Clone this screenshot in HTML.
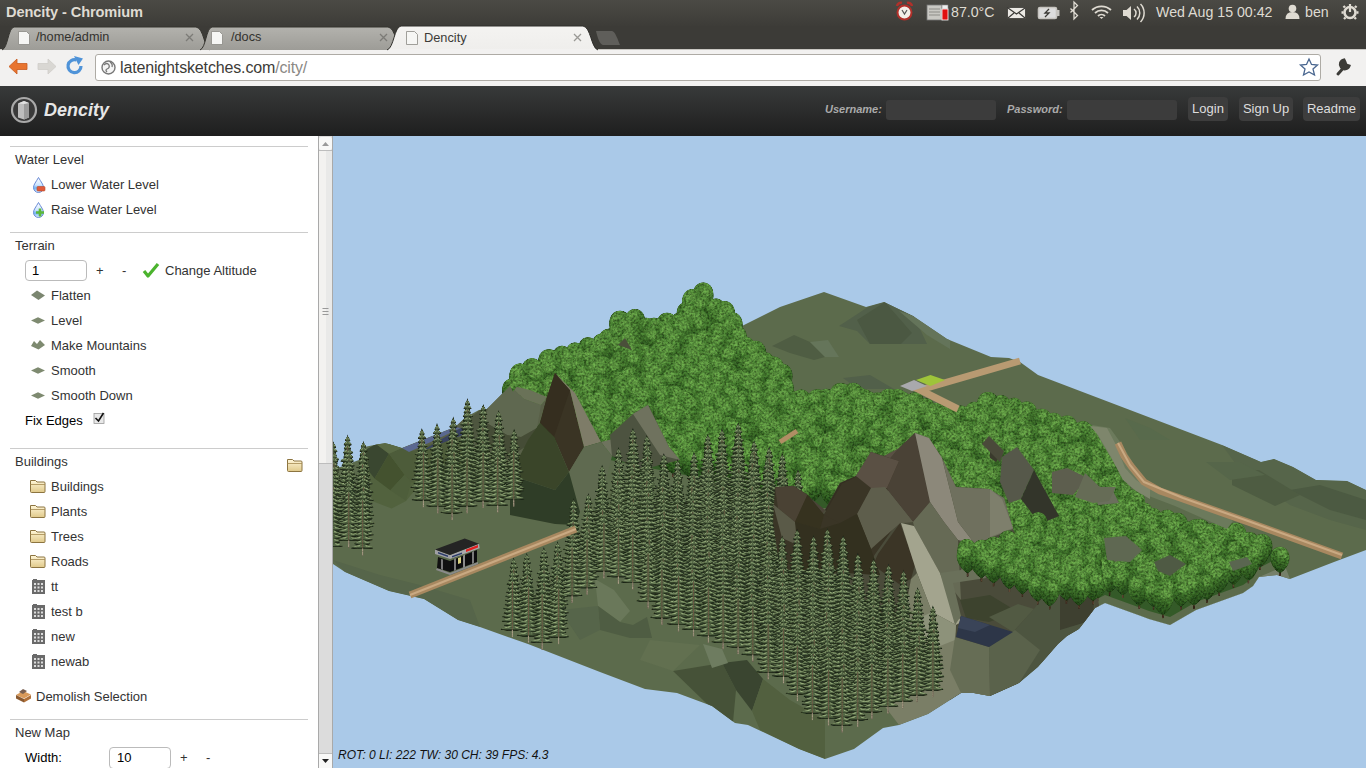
<!DOCTYPE html>
<html><head><meta charset="utf-8">
<style>
*{margin:0;padding:0;box-sizing:border-box}
html,body{width:1366px;height:768px;overflow:hidden;background:#fff;font-family:"Liberation Sans",sans-serif}
.abs{position:absolute}
#topbar{left:0;top:0;width:1366px;height:26px;background:linear-gradient(#4b4a45,#3d3c38)}
#tabstrip{left:0;top:26px;width:1366px;height:24px;background:#3c3b37}
#title{left:6px;top:4px;font-size:14.6px;font-weight:bold;color:#dfdbd2;letter-spacing:-0.1px}
.sys{color:#dfdbd2;font-size:14.2px;top:4px}
#toolbar{left:0;top:49px;width:1366px;height:37px;background:#f2f1f0;border-top:1px solid #c9c7c2}
#url{left:95px;top:54px;width:1226px;height:27px;background:#fff;border:1px solid #aeaba5;border-radius:3px}
#urltext{left:120px;top:58.5px;font-size:16px;color:#3c3b37;letter-spacing:-0.15px}
#hdr{left:0;top:86px;width:1366px;height:50px;background:linear-gradient(#383a3a,#1e1e1e)}
#logo{left:44px;top:100px;font-size:18px;font-weight:bold;font-style:italic;color:#e6e6e6}
.lbl{font-size:11px;font-weight:bold;font-style:italic;color:#aaa;top:103px}
.inp{top:100px;width:110px;height:20px;background:#3c3c3c;border-radius:3px}
.btn{top:97px;height:24px;background:#3d3d3d;border-radius:4px;color:#ddd;font-size:13px;line-height:24px;text-align:center}
#side{left:0;top:136px;width:318px;height:632px;background:#fff;color:#333;font-size:13px}
.hr{left:10px;width:298px;height:1px;background:#ccc}
.t{position:absolute;font-size:13px;line-height:15px;color:#333;white-space:nowrap}
#scroll{left:318px;top:136px;width:15px;height:632px;background:#dcdcdc;border-left:1px solid #a9a9a9;border-right:1px solid #a9a9a9}
#canvas{left:333px;top:136px;width:1033px;height:632px;background:#aac9e8;overflow:hidden}
</style></head><body>
<div id="topbar" class="abs"></div>
<div id="tabstrip" class="abs"></div>
<div id="toolbar" class="abs"></div>
<div id="url" class="abs"></div>

<svg class="abs" style="left:0;top:0" width="1366" height="86" viewBox="0 0 1366 86">
<defs>
<linearGradient id="tabin" x1="0" y1="0" x2="0" y2="1"><stop offset="0" stop-color="#b3b2ad"/><stop offset="1" stop-color="#9d9c97"/></linearGradient>
<linearGradient id="tabact" x1="0" y1="0" x2="0" y2="1"><stop offset="0" stop-color="#f4f3f1"/><stop offset="1" stop-color="#efeeec"/></linearGradient>
</defs>
<path d="M2,50 C8,48 8,28 14,27 L196,27 C204,28 204,48 210,50" fill="url(#tabin)" stroke="#35342f" stroke-width="1"/>
<path d="M200,50 C206,48 206,28 212,27 L388,27 C396,28 396,48 402,50" fill="url(#tabin)" stroke="#35342f" stroke-width="1"/>
<path d="M387,50 C394,48 394,27 401,26 L583,26 C591,27 591,48 598,50" fill="url(#tabact)" stroke="#2f2e2a" stroke-width="1"/><rect x="389" y="49" width="207" height="2" fill="#f2f1f0"/>
<path d="M596,31 L612,31 C615,31 618,40 620,45 L603,45 C600,45 597,36 596,31Z" fill="#5f5e5a"/>
<g fill="#f6f6f4" stroke="#8a8984" stroke-width="0.8">
<path d="M18.5,31.5 h8 l3,3 v10 h-11z"/><path d="M211.5,31.5 h8 l3,3 v10 h-11z"/><path d="M406.5,31.5 h8 l3,3 v10 h-11z"/>
</g>
<g stroke="#7c7b77" stroke-width="1.3"><path d="M186,34 l7,7 M193,34 l-7,7"/><path d="M380,34 l7,7 M387,34 l-7,7"/></g>
<g stroke="#9a9995" stroke-width="1.3"><path d="M574,34 l7,7 M581,34 l-7,7"/></g>
<path d="M9,66.5 L17,59 L17,63.5 L27,63.5 L27,69.5 L17,69.5 L17,74 Z" fill="#e8742f" stroke="#c85a1e" stroke-width="0.8" stroke-linejoin="round"/>
<path d="M56,66.5 L48,59 L48,63.5 L38,63.5 L38,69.5 L48,69.5 L48,74 Z" fill="#d9d7d3" stroke="#cfcdc9" stroke-width="0.8" stroke-linejoin="round"/>
<path d="M81,66 A6.5,6.5 0 1 1 76.5,60" stroke="#4f93d8" stroke-width="3.2" fill="none"/>
<path d="M74,56 L83,58.5 L78.5,65 Z" fill="#4f93d8"/>
<circle cx="108.5" cy="67.5" r="6.5" fill="#f4f4f4" stroke="#777" stroke-width="1.4"/>
<path d="M104,65 q3,-3 5,0 q1,3 -2,4 q-2,1 0,3 M110,62 q3,2 2,5" stroke="#777" stroke-width="1.3" fill="none"/>
<path d="M1309,59 L1311.5,64.5 L1317.5,65 L1313,69 L1314.5,75 L1309,72 L1303.5,75 L1305,69 L1300.5,65 L1306.5,64.5 Z" fill="none" stroke="#4a6790" stroke-width="1.3"/>
<path d="M1338,74 L1346,65 M1344,60 a4.5,4.5 0 1 0 5,6 l-3,-1 -1,-3z" stroke="#3c3b37" stroke-width="3" fill="#3c3b37" stroke-linecap="round"/>
<!-- system tray -->
<g>
<circle cx="904.5" cy="12.5" r="7" fill="#f3efe8" stroke="#b0302a" stroke-width="2"/>
<path d="M897,6 a4,4 0 0 1 5,-3 M912,6 a4,4 0 0 0 -5,-3" stroke="#b0302a" stroke-width="2.5" fill="none"/>
<path d="M902,10 l2.5,4 2.5,-4" stroke="#555" stroke-width="1.2" fill="none"/>
<rect x="927" y="5" width="15" height="15" fill="#c9c8c3" stroke="#777" stroke-width="0.8"/>
<path d="M929,9h11M929,12h11M929,15h11" stroke="#8d8c87" stroke-width="1"/>
<rect x="942" y="5" width="6" height="4" fill="#eee" stroke="#888" stroke-width="0.6"/>
<rect x="942" y="9" width="6" height="11" fill="#e01010" stroke="#fff" stroke-width="0.8"/>
<rect x="1007.5" y="7.5" width="18" height="11" fill="#ebe9e4" stroke="#3c3b37" stroke-width="0.8"/>
<path d="M1008,8 l8.5,6 8.5,-6 M1008,18 l6,-5 M1025,18 l-6,-5" stroke="#3c3b37" stroke-width="1.2" fill="none"/>
<rect x="1038.5" y="7.5" width="18" height="11" rx="1.5" fill="#ddd" stroke="#c6c4bf" stroke-width="1.6"/>
<rect x="1057" y="10" width="2.5" height="6" fill="#c6c4bf"/>
<path d="M1049,9 l-4,4 h4 l-4,4" stroke="#3c3b37" stroke-width="1.3" fill="none"/>
<path d="M1070.5,8.5 l7,7 -3.5,3.5 v-17 l3.5,3.5 -7,7" stroke="#dfdbd2" stroke-width="1.3" fill="none"/>
<path d="M1092,10 a14,14 0 0 1 19,0 M1095,13 a9.5,9.5 0 0 1 13,0 M1098,16 a5,5 0 0 1 7,0" stroke="#dfdbd2" stroke-width="1.8" fill="none"/>
<path d="M1101.5,19 l-2,-2 h4z" fill="#dfdbd2"/>
<path d="M1123,10 h3.5 l4.5,-4 v14 l-4.5,-4 h-3.5z" fill="#dfdbd2"/>
<path d="M1134,9 a5,5 0 0 1 0,8 M1137,6.5 a9,9 0 0 1 0,13 M1140.5,4 a13,13 0 0 1 0,18" stroke="#dfdbd2" stroke-width="1.5" fill="none"/>
<circle cx="1292.5" cy="8.5" r="3.8" fill="#dfdbd2"/>
<path d="M1285.5,19 q0,-7 7,-7 q7,0 7,7z" fill="#dfdbd2"/>
<circle cx="1350" cy="12.5" r="5.5" fill="none" stroke="#dfdbd2" stroke-width="2.6"/>
<path d="M1350,4 v8" stroke="#dfdbd2" stroke-width="2.2"/>
<path d="M1350,5 v0 M1343.5,12.5h-2 M1356.5,12.5h2 M1345.5,17.5l-1.5,1.5 M1354.5,17.5l1.5,1.5 M1345,7.5 l-1.5,-1.5 M1355,7.5l1.5,-1.5" stroke="#dfdbd2" stroke-width="2.4"/>
</g>
</svg>
<div class="abs" style="left:36px;top:30px;font-size:12.7px;color:#33322e">/home/admin</div>
<div class="abs" style="left:231px;top:30px;font-size:12.7px;color:#33322e">/docs</div>
<div class="abs" style="left:424px;top:30px;font-size:12.8px;color:#3c3b37">Dencity</div>
<div class="abs sys" style="left:951px">87.0°C</div>
<div class="abs sys" style="left:1156px">Wed Aug 15 00:42</div>
<div class="abs sys" style="left:1305px">ben</div>
<div id="title" class="abs">Dencity - Chromium</div>
<div id="urltext" class="abs">latenightsketches.com<span style="color:#8a8884">/city/</span></div>
<div id="hdr" class="abs"></div>
<svg class="abs" style="left:0;top:86px" width="44" height="50" viewBox="0 86 44 50">
<circle cx="24" cy="110" r="12" fill="#3a3a3a" stroke="#a9a9a9" stroke-width="2.2"/>
<path d="M18,103.5 l6,-2.5 l5,2 v14.5 l-5,2 l-6,-2z" fill="#bdbdbd"/>
<path d="M24,103.5 l5,-0.5 v14.5 l-5,2z" fill="#9a9a9a"/>
<path d="M18,103.5 l6,-2.5 l5,2 l-5,1z" fill="#e0e0e0"/>
</svg>
<div id="logo" class="abs">Dencity</div>
<div class="abs lbl" style="left:825px">Username:</div>
<div class="abs inp" style="left:886px"></div>
<div class="abs lbl" style="left:1007px">Password:</div>
<div class="abs inp" style="left:1067px"></div>
<div class="abs btn" style="left:1188px;width:40px">Login</div>
<div class="abs btn" style="left:1239px;width:54px">Sign Up</div>
<div class="abs btn" style="left:1303px;width:57px">Readme</div>
<div id="side" class="abs"></div>

<div class="abs hr" style="top:146px"></div>
<div class="t" style="left:15px;top:152px">Water Level</div>
<div class="t" style="left:51px;top:177px">Lower Water Level</div>
<div class="t" style="left:51px;top:202px">Raise Water Level</div>
<div class="abs hr" style="top:232px"></div>
<div class="t" style="left:15px;top:238px">Terrain</div>
<div class="abs" style="left:25px;top:260px;width:62px;height:21px;border:1px solid #bbb;border-radius:4px;background:#fff"></div>
<div class="t" style="left:32px;top:263px;color:#000">1</div>
<div class="t" style="left:96px;top:263px">+</div>
<div class="t" style="left:122px;top:263px">-</div>
<div class="t" style="left:165px;top:263px">Change Altitude</div>
<div class="t" style="left:51px;top:288px">Flatten</div>
<div class="t" style="left:51px;top:313px">Level</div>
<div class="t" style="left:51px;top:338px">Make Mountains</div>
<div class="t" style="left:51px;top:363px">Smooth</div>
<div class="t" style="left:51px;top:388px">Smooth Down</div>
<div class="t" style="left:25px;top:413px;color:#000">Fix Edges</div>
<div class="abs hr" style="top:448px"></div>
<div class="t" style="left:15px;top:454px">Buildings</div>
<div class="t" style="left:51px;top:479px">Buildings</div>
<div class="t" style="left:51px;top:504px">Plants</div>
<div class="t" style="left:51px;top:529px">Trees</div>
<div class="t" style="left:51px;top:554px">Roads</div>
<div class="t" style="left:51px;top:579px">tt</div>
<div class="t" style="left:51px;top:604px">test b</div>
<div class="t" style="left:51px;top:629px">new</div>
<div class="t" style="left:51px;top:654px">newab</div>
<div class="t" style="left:36px;top:689px">Demolish Selection</div>
<div class="abs hr" style="top:719px"></div>
<div class="t" style="left:15px;top:725px">New Map</div>
<div class="t" style="left:25px;top:750px;color:#000">Width:</div>
<div class="abs" style="left:109px;top:747px;width:62px;height:22px;border:1px solid #bbb;border-radius:4px;background:#fff"></div>
<div class="t" style="left:117px;top:750px;color:#000">10</div>
<div class="t" style="left:180px;top:750px">+</div>
<div class="t" style="left:206px;top:750px">-</div>
<svg class="abs" style="left:0;top:136px" width="318" height="632" viewBox="0 136 318 632">
<defs>
<linearGradient id="drop" x1="0" y1="0" x2="0" y2="1"><stop offset="0" stop-color="#fff"/><stop offset="0.5" stop-color="#cfe6ff"/><stop offset="0.7" stop-color="#6fb2f2"/><stop offset="1" stop-color="#e8f4ff"/></linearGradient>
<linearGradient id="fold" x1="0" y1="0" x2="0" y2="1"><stop offset="0" stop-color="#fff6d8"/><stop offset="1" stop-color="#e0c98a"/></linearGradient>
<g id="dropi"><path d="M38.5,177.5 C36,182 33.5,184.5 33.5,187.5 a5,5 0 0 0 10,0 C43.5,184.5 41,182 38.5,177.5z" fill="url(#drop)" stroke="#5b7fd0" stroke-width="0.9"/></g>
<g id="folder"><path d="M30.5,480.5 h5 l1.5,1.5 h7 a1,1 0 0 1 1,1 v8.5 a1,1 0 0 1 -1,1 h-12.5 a1,1 0 0 1 -1,-1z" fill="url(#fold)" stroke="#8c7440" stroke-width="1"/><path d="M30.5,484.5 h14.5" stroke="#a48a50" stroke-width="0.8"/></g>
<g id="bld"><rect x="32" y="580" width="13" height="14" fill="#6a6a6a"/><path d="M34,583h2v2h-2zM37.5,583h2v2h-2zM41,583h2v2h-2zM34,586.5h2v2h-2zM37.5,586.5h2v2h-2zM41,586.5h2v2h-2zM34,590h2v2h-2zM37.5,590h2v2h-2zM41,590h2v2h-2z" fill="#dcdcdc"/><rect x="33" y="579" width="4" height="2" fill="#6a6a6a"/></g>
<g id="terr"><path d="M31,296 l7,-4 l7,4 l-7,4z" fill="#7e8a70"/></g>
</defs>
<use href="#dropi"/>
<rect x="37" y="186.5" width="8" height="4.5" rx="1" fill="#e05a3a" stroke="#b84a2a" stroke-width="0.6"/>
<use href="#dropi" y="25"/>
<path d="M40,208.5 v8 M36,212.5 h8" stroke="#5cb83a" stroke-width="2.6"/>
<path d="M144,271 l4,5 l10,-12" stroke="#4bb32e" stroke-width="3.2" fill="none" stroke-linejoin="round"/>
<path d="M31,295 l6,-4.5 l8,5 l-6.5,4.5z" fill="#7b8670"/>
<path d="M31,320.5 l7,-3.2 l7,3.2 l-7,3.2z" fill="#7e8a70"/>
<path d="M31,346 l3,-5 l3,3 l3,-4 l5,5 l-6.5,4.5 z" fill="#7e8a70"/>
<path d="M31,370.5 l7,-3.2 l7,3.2 l-7,3.2z" fill="#7e8a70"/>
<path d="M31,395.5 l7,-3.2 l7,3.2 l-7,3.2z" fill="#7e8a70"/>
<rect x="94" y="413.5" width="10" height="10" fill="#e8e8e8" stroke="#999" stroke-width="0.8"/>
<path d="M95.5,418 l3,3 l5,-8" stroke="#111" stroke-width="1.6" fill="none"/>
<use href="#folder" x="257" y="-21"/>
<use href="#folder"/>
<use href="#folder" y="25"/>
<use href="#folder" y="50"/>
<use href="#folder" y="75"/>
<use href="#bld"/>
<use href="#bld" y="25"/>
<use href="#bld" y="50"/>
<use href="#bld" y="75"/>
<path d="M16,695 l7,-4 l8,3.5 l-7,4z" fill="#d99a5a"/>
<path d="M16,695 v3.5 l8,4 v-3.5z" fill="#8a5a30"/>
<path d="M24,699 l7,-4 v3.5 l-7,4z" fill="#b07038"/>
<path d="M19,692 l4,-3 l4,2 l-4,3z" fill="#7a6050"/>
</svg>
<div id="scroll" class="abs"></div>
<svg class="abs" style="left:318px;top:136px" width="15" height="632" viewBox="318 136 15 632">
<rect x="319" y="137" width="13" height="13" rx="2" fill="#f8f8f7"/>
<path d="M322,146 l3.5,-4 l3.5,4z" fill="#9a9a9a"/>
<rect x="319" y="150" width="13" height="314" fill="#f3f2f0"/>
<rect x="326" y="150" width="6" height="314" fill="#e9e9e8"/>
<path d="M319,150.5 h13 M319,463.5 h13" stroke="#bdbdbd" stroke-width="1"/>
<path d="M322.5,308.5 h6 M322.5,311.5 h6 M322.5,314.5 h6" stroke="#999" stroke-width="1"/>
<rect x="319" y="754" width="13" height="14" fill="#f8f8f7"/>
<path d="M322,759 l3.5,4 l3.5,-4z" fill="#222"/>
<path d="M319,753.5 h13" stroke="#bdbdbd" stroke-width="1"/>
</svg>
<div id="canvas" class="abs"><svg width="1033" height="632" viewBox="333 136 1033 632" style="position:absolute;left:0;top:0">
<defs>
<clipPath id="clipT"><polygon points="333,470 343,466 359,460 364,447 385,443 402,448 455,427 466,417 479,410 487,409 510,386 513,392 520,382 536,377 562,360 588,352 609,346 620,330 635,326 654,334 680,328 693,310 703,304 716,312 732,330 740,327 780,307 824,292 866,307 884,302 913,316 947,339 991,357 1009,358 1020,362 1038,375 1080,391 1222,445 1261,462 1274,459 1293,467 1316,480 1347,481 1366,490 1366,550 1334,562 1290,579 1277,575 1259,577 1253,586 1243,593 1196,610 1170,625 1149,619 1141,616 1105,603 1095,608 1079,629 1067,636 1058,644 1038,667 1019,683 990,696 974,693 961,693 928,714 899,725 883,728 854,749 825,759 799,749 748,725 735,723 712,706 677,693 645,689 600,672 528,644 480,627 458,620 424,599 389,591 345,572 333,564"/></clipPath>
<filter id="leaf" x="333" y="136" width="1033" height="632" filterUnits="userSpaceOnUse"><feTurbulence type="fractalNoise" baseFrequency="0.45" numOctaves="2" seed="5" result="n"/><feColorMatrix in="n" type="matrix" values="1.9 0 0 0 -0.45 1.9 0 0 0 -0.45 1.9 0 0 0 -0.45 0 0 0 0 1" result="g"/><feComposite in="SourceGraphic" in2="g" operator="arithmetic" k1="1.15" k2="0.45" k3="0" k4="0"/></filter>
<filter id="needle" x="333" y="136" width="1033" height="632" filterUnits="userSpaceOnUse"><feTurbulence type="fractalNoise" baseFrequency="0.35 0.8" numOctaves="2" seed="9" result="n"/><feColorMatrix in="n" type="matrix" values="1 0 0 0 0 1 0 0 0 0 1 0 0 0 0 0 0 0 0 1" result="g"/><feComposite in="SourceGraphic" in2="g" operator="arithmetic" k1="1.2" k2="0.62" k3="0" k4="0"/></filter>
<g id="ct"><path d="M0,-67 L3,-50 L6,-20 L0,-14 L-6,-20 L-3,-50Z" fill="#263120"/><path d="M0,-65.2 L2.7,-60.6 L1.0,-59.8 L-0.9,-59.8 L-2.5,-60.6Z" fill="#222c1b"/><path d="M0,-65.4 L2.4,-61.4 L1.1,-61.0 L-1.0,-61.0 L-2.2,-61.4Z" fill="#4a5b3d"/><path d="M-0.2,-64.4 L-2.0,-61.8 L-0.5,-62.4Z M0.5,-64.0 L2.3,-61.7 L0.7,-62.2Z" fill="#85986c"/><path d="M0,-61.1 L4.1,-56.5 L1.7,-55.7 L-1.5,-55.7 L-3.9,-56.5Z" fill="#222c1b"/><path d="M0,-61.3 L3.8,-57.3 L1.8,-56.9 L-1.7,-56.9 L-3.6,-57.3Z" fill="#4a5b3d"/><path d="M-0.3,-60.3 L-3.4,-57.7 L-0.9,-58.3Z M0.8,-59.9 L3.7,-57.6 L1.2,-58.1Z" fill="#85986c"/><path d="M0,-57.0 L3.3,-52.4 L1.2,-51.6 L-1.5,-51.6 L-3.8,-52.4Z" fill="#222c1b"/><path d="M0,-57.2 L3.0,-53.2 L1.4,-52.8 L-1.6,-52.8 L-3.5,-53.2Z" fill="#4a5b3d"/><path d="M-0.3,-56.2 L-3.3,-53.6 L-0.9,-54.2Z M0.6,-55.8 L2.9,-53.5 L0.9,-54.0Z" fill="#85986c"/><path d="M0,-52.9 L5.6,-48.3 L2.4,-47.5 L-1.8,-47.5 L-4.5,-48.3Z" fill="#222c1b"/><path d="M0,-53.1 L5.3,-49.1 L2.7,-48.7 L-2.0,-48.7 L-4.2,-49.1Z" fill="#4a5b3d"/><path d="M-0.4,-52.1 L-4.0,-49.5 L-1.1,-50.1Z M1.2,-51.7 L5.2,-49.4 L1.7,-49.9Z" fill="#85986c"/><path d="M0,-48.8 L4.3,-44.2 L1.7,-43.4 L-1.8,-43.4 L-4.3,-44.2Z" fill="#222c1b"/><path d="M0,-49.0 L4.0,-45.0 L1.9,-44.6 L-1.9,-44.6 L-4.0,-45.0Z" fill="#4a5b3d"/><path d="M-0.4,-48.0 L-3.8,-45.4 L-1.1,-46.0Z M0.9,-47.6 L3.9,-45.3 L1.2,-45.8Z" fill="#85986c"/><path d="M0,-44.7 L6.3,-40.1 L2.7,-39.3 L-3.2,-39.3 L-7.2,-40.1Z" fill="#222c1b"/><path d="M0,-44.9 L6.0,-40.9 L3.0,-40.5 L-3.5,-40.5 L-6.9,-40.9Z" fill="#4a5b3d"/><path d="M-0.6,-43.9 L-6.7,-41.3 L-1.9,-41.9Z M1.4,-43.5 L5.9,-41.2 L1.9,-41.7Z" fill="#85986c"/><path d="M0,-40.6 L5.5,-36.0 L2.4,-35.2 L-2.6,-35.2 L-6.1,-36.0Z" fill="#222c1b"/><path d="M0,-40.8 L5.2,-36.8 L2.6,-36.4 L-2.9,-36.4 L-5.8,-36.8Z" fill="#4a5b3d"/><path d="M-0.5,-39.8 L-5.6,-37.2 L-1.6,-37.8Z M1.2,-39.4 L5.1,-37.1 L1.7,-37.6Z" fill="#85986c"/><path d="M0,-36.5 L6.7,-31.9 L3.0,-31.1 L-3.5,-31.1 L-7.7,-31.9Z" fill="#222c1b"/><path d="M0,-36.7 L6.4,-32.7 L3.3,-32.3 L-3.8,-32.3 L-7.4,-32.7Z" fill="#4a5b3d"/><path d="M-0.7,-35.7 L-7.2,-33.1 L-2.1,-33.7Z M1.5,-35.3 L6.3,-33.0 L2.1,-33.5Z" fill="#85986c"/><path d="M0,-32.4 L7.4,-27.8 L3.3,-27.0 L-3.1,-27.0 L-6.9,-27.8Z" fill="#222c1b"/><path d="M0,-32.6 L7.1,-28.6 L3.6,-28.2 L-3.4,-28.2 L-6.6,-28.6Z" fill="#4a5b3d"/><path d="M-0.6,-31.6 L-6.4,-29.0 L-1.8,-29.6Z M1.6,-31.2 L7.0,-28.9 L2.3,-29.4Z" fill="#85986c"/><path d="M0,-28.3 L9.4,-23.7 L4.3,-22.9 L-4.0,-22.9 L-8.8,-23.7Z" fill="#222c1b"/><path d="M0,-28.5 L9.1,-24.5 L4.7,-24.1 L-4.4,-24.1 L-8.5,-24.5Z" fill="#4a5b3d"/><path d="M-0.8,-27.5 L-8.3,-24.9 L-2.4,-25.5Z M2.1,-27.1 L9.0,-24.8 L3.0,-25.3Z" fill="#85986c"/><path d="M0,-24.2 L6.9,-19.6 L3.0,-18.8 L-3.7,-18.8 L-8.2,-19.6Z" fill="#222c1b"/><path d="M0,-24.4 L6.6,-20.4 L3.3,-20.0 L-4.1,-20.0 L-7.9,-20.4Z" fill="#4a5b3d"/><path d="M-0.7,-23.4 L-7.7,-20.8 L-2.2,-21.4Z M1.5,-23.0 L6.5,-20.7 L2.1,-21.2Z" fill="#85986c"/><path d="M0,-20.1 L10.2,-15.5 L4.7,-14.7 L-4.9,-14.7 L-10.7,-15.5Z" fill="#222c1b"/><path d="M0,-20.3 L9.9,-16.3 L5.2,-15.9 L-5.4,-15.9 L-10.4,-16.3Z" fill="#4a5b3d"/><path d="M-1.0,-19.3 L-10.2,-16.7 L-3.0,-17.3Z M2.3,-18.9 L9.8,-16.6 L3.3,-17.1Z" fill="#85986c"/><path d="M0,-16.0 L7.8,-11.4 L3.5,-10.6 L-3.8,-10.6 L-8.5,-11.4Z" fill="#222c1b"/><path d="M0,-16.2 L7.5,-12.2 L3.8,-11.8 L-4.2,-11.8 L-8.2,-12.2Z" fill="#4a5b3d"/><path d="M-0.8,-15.2 L-8.0,-12.6 L-2.3,-13.2Z M1.7,-14.8 L7.4,-12.5 L2.4,-13.0Z" fill="#85986c"/><path d="M0,-11.9 L10.6,-7.3 L4.9,-6.5 L-5.5,-6.5 L-11.8,-7.3Z" fill="#222c1b"/><path d="M0,-12.1 L10.3,-8.1 L5.4,-7.7 L-6.1,-7.7 L-11.5,-8.1Z" fill="#4a5b3d"/><path d="M-1.1,-11.1 L-11.3,-8.5 L-3.3,-9.1Z M2.4,-10.7 L10.2,-8.4 L3.4,-8.9Z" fill="#85986c"/><rect x="-0.5" y="-55" width="1" height="48" fill="#5e503c"/><rect x="-0.6" y="-7" width="1.2" height="7" fill="#8e8670"/></g>
<linearGradient id="crg" x1="0.2" y1="0" x2="0.5" y2="1"><stop offset="0" stop-color="#558a3a"/><stop offset="0.45" stop-color="#3d6e29"/><stop offset="1" stop-color="#1f4215"/></linearGradient><g id="dt"><rect x="-0.7" y="-5" width="1.4" height="5" fill="#4e3a2a"/><path d="M0,-3 C-6,-7 -10,-13 -10,-19 C-10,-27 -5,-31 0,-31 C5,-31 10,-27 10,-19 C10,-13 6,-7 0,-3Z" fill="url(#crg)"/><ellipse cx="-2.5" cy="-23" rx="5.5" ry="4.5" fill="#6fa84e" opacity="0.45"/></g>
</defs>
<polygon points="333,470 343,466 359,460 364,447 385,443 402,448 455,427 466,417 479,410 487,409 510,386 513,392 520,382 536,377 562,360 588,352 609,346 620,330 635,326 654,334 680,328 693,310 703,304 716,312 732,330 740,327 780,307 824,292 866,307 884,302 913,316 947,339 991,357 1009,358 1020,362 1038,375 1080,391 1222,445 1261,462 1274,459 1293,467 1316,480 1347,481 1366,490 1366,550 1334,562 1290,579 1277,575 1259,577 1253,586 1243,593 1196,610 1170,625 1149,619 1141,616 1105,603 1095,608 1079,629 1067,636 1058,644 1038,667 1019,683 990,696 974,693 961,693 928,714 899,725 883,728 854,749 825,759 799,749 748,725 735,723 712,706 677,693 645,689 600,672 528,644 480,627 458,620 424,599 389,591 345,572 333,564" fill="#5c6b4c" />
<g clip-path="url(#clipT)">
<polygon points="839,326 868,307 885,302 914,316 927,344 901,344 870,344 857,331" fill="#52604a" />
<polygon points="857,320 885,302 912,333 901,344 870,344" fill="#4b5842" />
<polygon points="899,311 914,316 950,340 950,349 927,335" fill="#64745a" />
<polygon points="772,346 794,335 810,342 825,357 814,360 790,353" fill="#4f5d43" />
<polygon points="810,342 828,340 839,357 825,357" fill="#65755a" />
<polygon points="843,378 870,375 894,389 858,389" fill="#52604a" />
<polygon points="1222,445 1261,462 1274,459 1293,467 1316,480 1347,481 1366,490 1366,530 1330,520 1290,505 1240,470" fill="#56654a" />
<polygon points="1290,490 1320,485 1366,500 1366,520 1330,510" fill="#4c5a42" />
<polygon points="1232,470 1259,470 1300,495 1275,506 1232,485" fill="#4e5c42" />
<polygon points="1206,462 1240,462 1265,475 1230,480" fill="#56664a" />
<polygon points="1125,418 1150,428 1170,440 1140,440" fill="#586a4c" />
<polygon points="333,560 345,572 389,591 424,599 458,620 480,627 470,600 420,585 380,575" fill="#56654a" />
<polygon points="595,579 614,590 630,611 620,622 598,606" fill="#6a785a" />
<polygon points="598,606 620,622 633,625 647,617 652,638 630,638 600,630" fill="#4f5d43" />
<polygon points="560,610 598,606 600,630 580,640" fill="#56654a" />
<polygon points="673,671 722,663 736,690 733,722 706,703" fill="#465238" />
<polygon points="722,663 747,660 763,679 752,711 736,690" fill="#3a4530" />
<polygon points="703,644 722,649 728,663 712,668" fill="#6e7c60" />
<polygon points="752,711 763,679 790,700 825,720 825,759 799,749 760,730" fill="#52603f" />
<polygon points="650,640 700,645 673,671 640,660" fill="#627050" />
<polygon points="512,387 520,375 536,370 562,352 588,345 609,339 620,322 635,318 654,327 680,320 693,301 703,294 716,304 732,323 736,337 765,360 782,374 786,396 816,400 853,393 889,400 915,399 947,418 988,404 1014,403 1040,418 1067,426 1087,430 1108,456 1123,488 1154,519 1212,532 1262,544 1280,554 1282,556 1259,568 1253,578 1243,585 1196,602 1170,617 1149,611 1141,608 1105,595 1095,600 1060,598 1000,568 950,528 880,508 800,508 700,478 600,458 512,428" fill="#345a28" />
<polygon points="1095,608 1105,603 1141,616 1149,619 1170,625 1196,610 1243,593 1253,586 1259,577 1285,566 1290,579 1259,586 1253,593 1243,599 1196,616 1170,630 1149,624 1141,621 1105,608 1095,613" fill="#76806a" />
</g>
<g filter="url(#leaf)"><use href="#dt" transform="translate(703.2,313.9) scale(-1.01,1.01)"/><use href="#dt" transform="translate(703.0,316.0) scale(-1.03,1.03)"/><use href="#dt" transform="translate(693.0,323.0) scale(1.10,1.10)"/><use href="#dt" transform="translate(702.6,325.5) scale(0.94,0.94)"/><use href="#dt" transform="translate(716.0,326.0) scale(0.89,0.89)"/><use href="#dt" transform="translate(686.5,332.5) scale(-0.98,0.98)"/><use href="#dt" transform="translate(692.1,333.8) scale(0.89,0.89)"/><use href="#dt" transform="translate(718.3,335.2) scale(0.88,0.88)"/><use href="#dt" transform="translate(724.0,335.5) scale(-1.11,1.11)"/><use href="#dt" transform="translate(699.8,339.9) scale(0.93,0.93)"/><use href="#dt" transform="translate(635.0,340.0) scale(1.00,1.00)"/><use href="#dt" transform="translate(719.8,341.7) scale(-1.08,1.08)"/><use href="#dt" transform="translate(680.0,342.0) scale(-0.95,0.95)"/><use href="#dt" transform="translate(688.0,343.6) scale(0.89,0.89)"/><use href="#dt" transform="translate(620.0,344.0) scale(1.07,1.07)"/><use href="#dt" transform="translate(630.5,344.1) scale(0.88,0.88)"/><use href="#dt" transform="translate(732.0,345.0) scale(-1.06,1.06)"/><use href="#dt" transform="translate(667.0,345.5) scale(-1.06,1.06)"/><use href="#dt" transform="translate(621.9,346.3) scale(-0.93,0.93)"/><use href="#dt" transform="translate(646.0,347.0) scale(-0.94,0.94)"/><use href="#dt" transform="translate(731.1,347.5) scale(0.96,0.96)"/><use href="#dt" transform="translate(700.9,348.3) scale(1.05,1.05)"/><use href="#dt" transform="translate(677.2,348.4) scale(-1.05,1.05)"/><use href="#dt" transform="translate(654.0,349.0) scale(-1.01,1.01)"/><use href="#dt" transform="translate(686.6,350.6) scale(1.07,1.07)"/><use href="#dt" transform="translate(630.2,351.0) scale(0.94,0.94)"/><use href="#dt" transform="translate(663.3,355.7) scale(-1.11,1.11)"/><use href="#dt" transform="translate(717.4,356.6) scale(-1.09,1.09)"/><use href="#dt" transform="translate(649.1,356.8) scale(-0.94,0.94)"/><use href="#dt" transform="translate(616.9,357.3) scale(1.06,1.06)"/><use href="#dt" transform="translate(729.1,357.8) scale(-1.06,1.06)"/><use href="#dt" transform="translate(736.0,359.0) scale(-1.09,1.09)"/><use href="#dt" transform="translate(704.4,359.4) scale(0.94,0.94)"/><use href="#dt" transform="translate(676.0,360.9) scale(1.03,1.03)"/><use href="#dt" transform="translate(609.0,361.0) scale(1.04,1.04)"/><use href="#dt" transform="translate(719.2,361.9) scale(0.99,0.99)"/><use href="#dt" transform="translate(631.1,362.1) scale(1.05,1.05)"/><use href="#dt" transform="translate(601.9,364.0) scale(0.98,0.98)"/><use href="#dt" transform="translate(692.0,365.2) scale(-1.02,1.02)"/><use href="#dt" transform="translate(745.5,365.5) scale(0.93,0.93)"/><use href="#dt" transform="translate(663.0,365.8) scale(0.90,0.90)"/><use href="#dt" transform="translate(732.4,366.4) scale(-0.91,0.91)"/><use href="#dt" transform="translate(745.7,366.7) scale(0.91,0.91)"/><use href="#dt" transform="translate(588.0,367.0) scale(-0.96,0.96)"/><use href="#dt" transform="translate(593.4,368.3) scale(-0.89,0.89)"/><use href="#dt" transform="translate(617.3,369.4) scale(1.05,1.05)"/><use href="#dt" transform="translate(701.9,369.6) scale(1.05,1.05)"/><use href="#dt" transform="translate(575.0,370.5) scale(0.90,0.90)"/><use href="#dt" transform="translate(672.3,370.5) scale(0.97,0.97)"/><use href="#dt" transform="translate(632.0,371.9) scale(1.08,1.08)"/><use href="#dt" transform="translate(742.4,371.9) scale(0.90,0.90)"/><use href="#dt" transform="translate(602.9,372.3) scale(1.10,1.10)"/><use href="#dt" transform="translate(643.9,372.4) scale(-0.91,0.91)"/><use href="#dt" transform="translate(562.0,374.0) scale(-0.91,0.91)"/><use href="#dt" transform="translate(755.3,374.3) scale(1.08,1.08)"/><use href="#dt" transform="translate(714.6,374.4) scale(1.03,1.03)"/><use href="#dt" transform="translate(659.3,374.9) scale(-1.03,1.03)"/><use href="#dt" transform="translate(575.4,375.2) scale(-0.90,0.90)"/><use href="#dt" transform="translate(689.2,377.5) scale(-1.06,1.06)"/><use href="#dt" transform="translate(647.2,377.7) scale(-0.96,0.96)"/><use href="#dt" transform="translate(619.6,378.5) scale(-0.89,0.89)"/><use href="#dt" transform="translate(757.8,378.8) scale(0.95,0.95)"/><use href="#dt" transform="translate(563.9,379.2) scale(-0.97,0.97)"/><use href="#dt" transform="translate(731.3,379.6) scale(1.11,1.11)"/><use href="#dt" transform="translate(592.2,380.6) scale(1.08,1.08)"/><use href="#dt" transform="translate(677.6,381.8) scale(-0.89,0.89)"/><use href="#dt" transform="translate(703.4,381.8) scale(0.98,0.98)"/><use href="#dt" transform="translate(765.0,382.0) scale(0.96,0.96)"/><use href="#dt" transform="translate(660.1,382.2) scale(-1.01,1.01)"/><use href="#dt" transform="translate(549.0,383.0) scale(-1.09,1.09)"/><use href="#dt" transform="translate(629.8,383.0) scale(-1.08,1.08)"/><use href="#dt" transform="translate(714.3,383.6) scale(-0.88,0.88)"/><use href="#dt" transform="translate(549.5,384.6) scale(1.06,1.06)"/><use href="#dt" transform="translate(746.2,384.8) scale(-0.88,0.88)"/><use href="#dt" transform="translate(602.2,387.0) scale(1.00,1.00)"/><use href="#dt" transform="translate(647.3,387.5) scale(-0.92,0.92)"/><use href="#dt" transform="translate(688.6,387.6) scale(0.96,0.96)"/><use href="#dt" transform="translate(577.2,387.7) scale(0.94,0.94)"/><use href="#dt" transform="translate(563.3,387.7) scale(-0.95,0.95)"/><use href="#dt" transform="translate(773.5,389.0) scale(-1.05,1.05)"/><use href="#dt" transform="translate(760.7,389.2) scale(0.91,0.91)"/><use href="#dt" transform="translate(727.9,389.4) scale(0.90,0.90)"/><use href="#dt" transform="translate(615.8,390.0) scale(1.05,1.05)"/><use href="#dt" transform="translate(532.0,390.1) scale(-1.03,1.03)"/><use href="#dt" transform="translate(591.5,390.2) scale(-0.98,0.98)"/><use href="#dt" transform="translate(676.6,390.4) scale(-1.09,1.09)"/><use href="#dt" transform="translate(700.5,390.9) scale(-1.09,1.09)"/><use href="#dt" transform="translate(536.0,392.0) scale(-0.93,0.93)"/><use href="#dt" transform="translate(552.0,392.8) scale(1.10,1.10)"/><use href="#dt" transform="translate(519.9,393.5) scale(0.97,0.97)"/><use href="#dt" transform="translate(691.1,393.9) scale(-0.94,0.94)"/><use href="#dt" transform="translate(602.6,394.1) scale(1.01,1.01)"/><use href="#dt" transform="translate(658.0,394.3) scale(1.06,1.06)"/><use href="#dt" transform="translate(578.5,394.4) scale(-0.96,0.96)"/><use href="#dt" transform="translate(630.4,394.9) scale(0.92,0.92)"/><use href="#dt" transform="translate(782.0,396.0) scale(1.04,1.04)"/><use href="#dt" transform="translate(714.3,396.8) scale(-0.92,0.92)"/><use href="#dt" transform="translate(520.0,397.0) scale(1.07,1.07)"/><use href="#dt" transform="translate(772.0,397.9) scale(-0.91,0.91)"/><use href="#dt" transform="translate(532.2,398.4) scale(-1.09,1.09)"/><use href="#dt" transform="translate(742.3,398.6) scale(-0.93,0.93)"/><use href="#dt" transform="translate(759.0,398.9) scale(1.05,1.05)"/><use href="#dt" transform="translate(560.2,399.1) scale(-0.92,0.92)"/><use href="#dt" transform="translate(701.4,399.6) scale(-0.94,0.94)"/><use href="#dt" transform="translate(731.8,401.1) scale(-1.01,1.01)"/><use href="#dt" transform="translate(618.2,401.4) scale(-0.96,0.96)"/><use href="#dt" transform="translate(672.9,402.9) scale(1.11,1.11)"/><use href="#dt" transform="translate(522.0,403.5) scale(0.90,0.90)"/><use href="#dt" transform="translate(580.1,403.8) scale(-0.90,0.90)"/><use href="#dt" transform="translate(593.2,403.8) scale(1.12,1.12)"/><use href="#dt" transform="translate(647.2,404.1) scale(-1.06,1.06)"/><use href="#dt" transform="translate(551.3,404.9) scale(0.93,0.93)"/><use href="#dt" transform="translate(687.4,404.9) scale(-0.91,0.91)"/><use href="#dt" transform="translate(784.0,407.0) scale(-0.97,0.97)"/><use href="#dt" transform="translate(774.3,407.1) scale(0.98,0.98)"/><use href="#dt" transform="translate(659.5,407.5) scale(1.05,1.05)"/><use href="#dt" transform="translate(745.9,408.2) scale(-1.03,1.03)"/><use href="#dt" transform="translate(758.0,408.4) scale(0.91,0.91)"/><use href="#dt" transform="translate(604.3,408.6) scale(0.98,0.98)"/><use href="#dt" transform="translate(630.0,408.6) scale(-1.10,1.10)"/><use href="#dt" transform="translate(718.8,408.8) scale(1.02,1.02)"/><use href="#dt" transform="translate(512.0,409.0) scale(-0.98,0.98)"/><use href="#dt" transform="translate(564.2,411.0) scale(1.05,1.05)"/><use href="#dt" transform="translate(704.7,411.5) scale(1.07,1.07)"/><use href="#dt" transform="translate(590.8,412.6) scale(1.08,1.08)"/><use href="#dt" transform="translate(621.9,412.7) scale(-1.03,1.03)"/><use href="#dt" transform="translate(649.3,412.8) scale(0.96,0.96)"/><use href="#dt" transform="translate(673.9,413.4) scale(-0.90,0.90)"/><use href="#dt" transform="translate(534.5,413.6) scale(1.07,1.07)"/><use href="#dt" transform="translate(546.7,414.3) scale(-1.03,1.03)"/><use href="#dt" transform="translate(633.7,414.5) scale(-0.98,0.98)"/><use href="#dt" transform="translate(728.2,414.6) scale(-1.03,1.03)"/><use href="#dt" transform="translate(853.0,415.0) scale(1.04,1.04)"/><use href="#dt" transform="translate(772.4,415.8) scale(0.92,0.92)"/><use href="#dt" transform="translate(521.2,415.9) scale(-1.07,1.07)"/><use href="#dt" transform="translate(663.9,416.4) scale(1.00,1.00)"/><use href="#dt" transform="translate(602.3,416.4) scale(0.89,0.89)"/><use href="#dt" transform="translate(687.3,417.3) scale(0.92,0.92)"/><use href="#dt" transform="translate(840.7,417.3) scale(1.11,1.11)"/><use href="#dt" transform="translate(865.0,417.3) scale(0.90,0.90)"/><use href="#dt" transform="translate(858.1,418.0) scale(1.01,1.01)"/><use href="#dt" transform="translate(786.0,418.0) scale(1.00,1.00)"/><use href="#dt" transform="translate(714.8,418.1) scale(1.08,1.08)"/><use href="#dt" transform="translate(576.5,418.4) scale(0.98,0.98)"/><use href="#dt" transform="translate(757.4,418.9) scale(0.93,0.93)"/><use href="#dt" transform="translate(826.5,418.9) scale(0.97,0.97)"/><use href="#dt" transform="translate(742.3,419.0) scale(0.91,0.91)"/><use href="#dt" transform="translate(897.6,419.1) scale(-0.97,0.97)"/><use href="#dt" transform="translate(828.3,419.7) scale(-0.95,0.95)"/><use href="#dt" transform="translate(877.0,419.7) scale(-0.88,0.88)"/><use href="#dt" transform="translate(801.0,420.0) scale(0.98,0.98)"/><use href="#dt" transform="translate(532.6,420.2) scale(-0.96,0.96)"/><use href="#dt" transform="translate(915.0,421.0) scale(0.93,0.93)"/><use href="#dt" transform="translate(645.5,421.1) scale(1.11,1.11)"/><use href="#dt" transform="translate(678.0,421.3) scale(0.93,0.93)"/><use href="#dt" transform="translate(902.0,421.5) scale(-0.97,0.97)"/><use href="#dt" transform="translate(816.0,422.0) scale(0.91,0.91)"/><use href="#dt" transform="translate(889.0,422.0) scale(1.07,1.07)"/><use href="#dt" transform="translate(869.1,422.5) scale(0.99,0.99)"/><use href="#dt" transform="translate(561.8,422.5) scale(0.93,0.93)"/><use href="#dt" transform="translate(619.1,422.8) scale(0.96,0.96)"/><use href="#dt" transform="translate(817.5,422.8) scale(1.08,1.08)"/><use href="#dt" transform="translate(588.2,423.3) scale(-0.99,0.99)"/><use href="#dt" transform="translate(703.4,423.7) scale(-1.01,1.01)"/><use href="#dt" transform="translate(798.1,424.2) scale(-1.08,1.08)"/><use href="#dt" transform="translate(770.1,424.9) scale(-1.08,1.08)"/><use href="#dt" transform="translate(785.5,425.0) scale(-0.97,0.97)"/><use href="#dt" transform="translate(718.0,425.0) scale(-0.98,0.98)"/><use href="#dt" transform="translate(1014.0,425.0) scale(0.88,0.88)"/><use href="#dt" transform="translate(732.8,425.0) scale(-0.95,0.95)"/><use href="#dt" transform="translate(844.5,425.0) scale(-0.95,0.95)"/><use href="#dt" transform="translate(1001.0,425.5) scale(0.98,0.98)"/><use href="#dt" transform="translate(858.1,425.9) scale(-1.04,1.04)"/><use href="#dt" transform="translate(988.0,426.0) scale(1.10,1.10)"/><use href="#dt" transform="translate(1000.0,426.0) scale(0.89,0.89)"/><use href="#dt" transform="translate(882.7,426.3) scale(1.10,1.10)"/><use href="#dt" transform="translate(631.4,426.3) scale(0.91,0.91)"/><use href="#dt" transform="translate(687.5,426.7) scale(-1.03,1.03)"/><use href="#dt" transform="translate(914.5,426.9) scale(0.88,0.88)"/><use href="#dt" transform="translate(574.8,427.2) scale(-1.04,1.04)"/><use href="#dt" transform="translate(518.2,427.3) scale(-0.90,0.90)"/><use href="#dt" transform="translate(925.7,427.3) scale(0.94,0.94)"/><use href="#dt" transform="translate(829.4,428.1) scale(-0.96,0.96)"/><use href="#dt" transform="translate(547.8,429.3) scale(1.10,1.10)"/><use href="#dt" transform="translate(742.2,429.6) scale(0.92,0.92)"/><use href="#dt" transform="translate(620.1,429.6) scale(1.03,1.03)"/><use href="#dt" transform="translate(605.3,429.7) scale(1.04,1.04)"/><use href="#dt" transform="translate(663.8,430.4) scale(1.07,1.07)"/><use href="#dt" transform="translate(974.3,430.7) scale(0.93,0.93)"/><use href="#dt" transform="translate(728.5,431.0) scale(1.01,1.01)"/><use href="#dt" transform="translate(562.7,431.2) scale(0.99,0.99)"/><use href="#dt" transform="translate(843.0,431.7) scale(-1.01,1.01)"/><use href="#dt" transform="translate(705.6,432.1) scale(-0.94,0.94)"/><use href="#dt" transform="translate(1027.0,432.5) scale(-1.00,1.00)"/><use href="#dt" transform="translate(868.7,432.7) scale(-0.99,0.99)"/><use href="#dt" transform="translate(790.0,432.8) scale(-1.00,1.00)"/><use href="#dt" transform="translate(760.5,432.8) scale(1.01,1.01)"/><use href="#dt" transform="translate(985.9,433.4) scale(0.88,0.88)"/><use href="#dt" transform="translate(936.3,433.7) scale(0.99,0.99)"/><use href="#dt" transform="translate(644.9,434.2) scale(1.04,1.04)"/><use href="#dt" transform="translate(816.5,434.5) scale(-0.97,0.97)"/><use href="#dt" transform="translate(896.5,434.6) scale(-1.11,1.11)"/><use href="#dt" transform="translate(1026.7,434.8) scale(1.03,1.03)"/><use href="#dt" transform="translate(925.1,435.1) scale(0.89,0.89)"/><use href="#dt" transform="translate(1009.0,435.3) scale(1.04,1.04)"/><use href="#dt" transform="translate(960.7,435.3) scale(0.96,0.96)"/><use href="#dt" transform="translate(632.1,435.3) scale(-1.00,1.00)"/><use href="#dt" transform="translate(674.4,435.4) scale(-1.10,1.10)"/><use href="#dt" transform="translate(535.8,435.4) scale(1.05,1.05)"/><use href="#dt" transform="translate(591.9,435.7) scale(0.96,0.96)"/><use href="#dt" transform="translate(999.0,436.0) scale(-0.97,0.97)"/><use href="#dt" transform="translate(799.7,436.0) scale(1.01,1.01)"/><use href="#dt" transform="translate(940.2,436.7) scale(-0.93,0.93)"/><use href="#dt" transform="translate(744.7,436.7) scale(0.98,0.98)"/><use href="#dt" transform="translate(663.9,436.9) scale(-1.08,1.08)"/><use href="#dt" transform="translate(857.1,437.5) scale(-1.08,1.08)"/><use href="#dt" transform="translate(968.7,438.1) scale(-1.00,1.00)"/><use href="#dt" transform="translate(547.0,438.3) scale(1.00,1.00)"/><use href="#dt" transform="translate(914.6,438.7) scale(1.04,1.04)"/><use href="#dt" transform="translate(574.1,438.8) scale(-0.96,0.96)"/><use href="#dt" transform="translate(829.8,438.9) scale(0.95,0.95)"/><use href="#dt" transform="translate(770.3,439.3) scale(1.03,1.03)"/><use href="#dt" transform="translate(883.8,439.9) scale(0.89,0.89)"/><use href="#dt" transform="translate(947.0,440.0) scale(1.09,1.09)"/><use href="#dt" transform="translate(1040.0,440.0) scale(-0.89,0.89)"/><use href="#dt" transform="translate(1012.6,440.0) scale(-0.88,0.88)"/><use href="#dt" transform="translate(607.0,440.1) scale(1.10,1.10)"/><use href="#dt" transform="translate(686.6,440.4) scale(1.04,1.04)"/><use href="#dt" transform="translate(873.9,440.6) scale(1.10,1.10)"/><use href="#dt" transform="translate(719.5,440.7) scale(1.03,1.03)"/><use href="#dt" transform="translate(676.4,440.9) scale(1.05,1.05)"/><use href="#dt" transform="translate(1041.7,441.0) scale(-1.04,1.04)"/><use href="#dt" transform="translate(927.0,441.2) scale(-1.04,1.04)"/><use href="#dt" transform="translate(593.1,441.6) scale(-1.06,1.06)"/><use href="#dt" transform="translate(757.0,442.8) scale(-0.92,0.92)"/><use href="#dt" transform="translate(985.5,442.8) scale(1.07,1.07)"/><use href="#dt" transform="translate(703.7,443.0) scale(-1.04,1.04)"/><use href="#dt" transform="translate(812.7,443.2) scale(1.08,1.08)"/><use href="#dt" transform="translate(1053.5,444.0) scale(-1.01,1.01)"/><use href="#dt" transform="translate(842.9,444.2) scale(-0.95,0.95)"/><use href="#dt" transform="translate(564.9,444.3) scale(-0.96,0.96)"/><use href="#dt" transform="translate(952.0,444.3) scale(1.03,1.03)"/><use href="#dt" transform="translate(728.1,444.8) scale(0.89,0.89)"/><use href="#dt" transform="translate(647.2,444.8) scale(-0.89,0.89)"/><use href="#dt" transform="translate(621.6,444.8) scale(1.07,1.07)"/><use href="#dt" transform="translate(828.9,445.1) scale(-1.10,1.10)"/><use href="#dt" transform="translate(911.6,445.4) scale(-0.88,0.88)"/><use href="#dt" transform="translate(1022.0,445.5) scale(1.02,1.02)"/><use href="#dt" transform="translate(897.6,445.8) scale(-1.12,1.12)"/><use href="#dt" transform="translate(856.8,445.8) scale(-0.98,0.98)"/><use href="#dt" transform="translate(785.4,446.0) scale(-1.03,1.03)"/><use href="#dt" transform="translate(771.4,446.1) scale(-0.92,0.92)"/><use href="#dt" transform="translate(659.2,446.5) scale(0.88,0.88)"/><use href="#dt" transform="translate(938.2,446.8) scale(0.91,0.91)"/><use href="#dt" transform="translate(603.6,447.7) scale(0.90,0.90)"/><use href="#dt" transform="translate(688.1,448.0) scale(-0.91,0.91)"/><use href="#dt" transform="translate(1067.0,448.0) scale(-1.05,1.05)"/><use href="#dt" transform="translate(801.5,448.4) scale(-1.06,1.06)"/><use href="#dt" transform="translate(1082.9,448.6) scale(0.89,0.89)"/><use href="#dt" transform="translate(578.7,448.7) scale(1.05,1.05)"/><use href="#dt" transform="translate(1053.8,449.4) scale(-1.06,1.06)"/><use href="#dt" transform="translate(881.8,449.9) scale(1.03,1.03)"/><use href="#dt" transform="translate(995.2,449.9) scale(0.99,0.99)"/><use href="#dt" transform="translate(966.1,450.1) scale(0.94,0.94)"/><use href="#dt" transform="translate(761.8,451.0) scale(-1.05,1.05)"/><use href="#dt" transform="translate(745.3,451.0) scale(0.88,0.88)"/><use href="#dt" transform="translate(729.5,451.1) scale(-1.08,1.08)"/><use href="#dt" transform="translate(715.2,451.1) scale(0.95,0.95)"/><use href="#dt" transform="translate(672.6,451.3) scale(0.92,0.92)"/><use href="#dt" transform="translate(635.2,451.4) scale(-1.00,1.00)"/><use href="#dt" transform="translate(645.9,451.7) scale(0.97,0.97)"/><use href="#dt" transform="translate(981.3,451.9) scale(0.99,0.99)"/><use href="#dt" transform="translate(1087.0,452.0) scale(0.91,0.91)"/><use href="#dt" transform="translate(897.4,452.0) scale(0.97,0.97)"/><use href="#dt" transform="translate(1064.1,452.2) scale(-1.03,1.03)"/><use href="#dt" transform="translate(785.8,452.6) scale(0.97,0.97)"/><use href="#dt" transform="translate(1012.1,452.7) scale(1.11,1.11)"/><use href="#dt" transform="translate(957.5,453.3) scale(-1.02,1.02)"/><use href="#dt" transform="translate(873.0,453.6) scale(0.89,0.89)"/><use href="#dt" transform="translate(844.7,454.2) scale(1.05,1.05)"/><use href="#dt" transform="translate(590.3,454.6) scale(0.96,0.96)"/><use href="#dt" transform="translate(703.1,454.7) scale(1.11,1.11)"/><use href="#dt" transform="translate(1040.9,455.0) scale(-1.02,1.02)"/><use href="#dt" transform="translate(621.4,455.4) scale(0.98,0.98)"/><use href="#dt" transform="translate(815.0,455.6) scale(0.97,0.97)"/><use href="#dt" transform="translate(1078.2,456.2) scale(1.02,1.02)"/><use href="#dt" transform="translate(887.2,456.3) scale(-1.07,1.07)"/><use href="#dt" transform="translate(944.0,456.4) scale(-0.88,0.88)"/><use href="#dt" transform="translate(915.7,456.4) scale(0.98,0.98)"/><use href="#dt" transform="translate(743.5,456.4) scale(1.08,1.08)"/><use href="#dt" transform="translate(929.6,456.7) scale(0.89,0.89)"/><use href="#dt" transform="translate(859.5,456.8) scale(1.07,1.07)"/><use href="#dt" transform="translate(659.1,456.9) scale(-1.02,1.02)"/><use href="#dt" transform="translate(1027.7,457.2) scale(1.08,1.08)"/><use href="#dt" transform="translate(632.8,458.6) scale(1.04,1.04)"/><use href="#dt" transform="translate(716.3,458.7) scale(-0.96,0.96)"/><use href="#dt" transform="translate(802.6,459.8) scale(1.01,1.01)"/><use href="#dt" transform="translate(830.9,460.3) scale(0.93,0.93)"/><use href="#dt" transform="translate(1094.0,460.7) scale(-1.10,1.10)"/><use href="#dt" transform="translate(955.6,460.8) scale(1.03,1.03)"/><use href="#dt" transform="translate(770.3,460.9) scale(-0.99,0.99)"/><use href="#dt" transform="translate(1054.6,461.0) scale(0.94,0.94)"/><use href="#dt" transform="translate(604.1,461.2) scale(-1.07,1.07)"/><use href="#dt" transform="translate(843.9,461.3) scale(0.90,0.90)"/><use href="#dt" transform="translate(689.5,461.3) scale(-1.07,1.07)"/><use href="#dt" transform="translate(967.3,461.4) scale(1.02,1.02)"/><use href="#dt" transform="translate(995.7,461.6) scale(1.09,1.09)"/><use href="#dt" transform="translate(926.7,461.7) scale(0.99,0.99)"/><use href="#dt" transform="translate(1094.7,461.8) scale(-0.93,0.93)"/><use href="#dt" transform="translate(1064.6,462.0) scale(0.92,0.92)"/><use href="#dt" transform="translate(899.1,462.0) scale(0.97,0.97)"/><use href="#dt" transform="translate(1010.2,462.9) scale(0.98,0.98)"/><use href="#dt" transform="translate(783.8,463.2) scale(-0.92,0.92)"/><use href="#dt" transform="translate(618.3,463.4) scale(-1.12,1.12)"/><use href="#dt" transform="translate(761.0,463.6) scale(0.91,0.91)"/><use href="#dt" transform="translate(702.7,464.2) scale(-1.07,1.07)"/><use href="#dt" transform="translate(873.5,465.3) scale(-1.02,1.02)"/><use href="#dt" transform="translate(985.9,465.3) scale(-1.00,1.00)"/><use href="#dt" transform="translate(1041.1,465.7) scale(0.89,0.89)"/><use href="#dt" transform="translate(677.6,466.0) scale(-1.09,1.09)"/><use href="#dt" transform="translate(816.9,466.1) scale(-1.02,1.02)"/><use href="#dt" transform="translate(730.5,466.6) scale(-1.07,1.07)"/><use href="#dt" transform="translate(630.3,466.7) scale(1.11,1.11)"/><use href="#dt" transform="translate(1054.1,466.8) scale(1.08,1.08)"/><use href="#dt" transform="translate(649.0,467.1) scale(-0.94,0.94)"/><use href="#dt" transform="translate(997.0,467.2) scale(-0.93,0.93)"/><use href="#dt" transform="translate(745.2,467.6) scale(-0.90,0.90)"/><use href="#dt" transform="translate(969.9,468.0) scale(1.01,1.01)"/><use href="#dt" transform="translate(912.8,468.2) scale(0.99,0.99)"/><use href="#dt" transform="translate(1101.0,469.3) scale(-1.10,1.10)"/><use href="#dt" transform="translate(829.0,469.5) scale(-1.02,1.02)"/><use href="#dt" transform="translate(1080.3,469.6) scale(0.91,0.91)"/><use href="#dt" transform="translate(941.0,470.1) scale(0.94,0.94)"/><use href="#dt" transform="translate(775.4,470.3) scale(1.03,1.03)"/><use href="#dt" transform="translate(887.7,470.6) scale(-1.04,1.04)"/><use href="#dt" transform="translate(1008.9,471.3) scale(-0.99,0.99)"/><use href="#dt" transform="translate(720.1,471.4) scale(1.11,1.11)"/><use href="#dt" transform="translate(981.8,471.4) scale(-0.93,0.93)"/><use href="#dt" transform="translate(802.4,471.7) scale(-0.94,0.94)"/><use href="#dt" transform="translate(1026.6,471.8) scale(1.10,1.10)"/><use href="#dt" transform="translate(661.8,471.8) scale(-1.08,1.08)"/><use href="#dt" transform="translate(925.0,471.9) scale(1.07,1.07)"/><use href="#dt" transform="translate(688.5,471.9) scale(1.04,1.04)"/><use href="#dt" transform="translate(860.1,472.0) scale(-0.89,0.89)"/><use href="#dt" transform="translate(840.7,472.9) scale(1.06,1.06)"/><use href="#dt" transform="translate(733.0,473.0) scale(-1.04,1.04)"/><use href="#dt" transform="translate(1039.7,473.4) scale(1.02,1.02)"/><use href="#dt" transform="translate(786.8,474.5) scale(-0.91,0.91)"/><use href="#dt" transform="translate(1091.9,474.8) scale(-0.94,0.94)"/><use href="#dt" transform="translate(1070.0,475.0) scale(-1.00,1.00)"/><use href="#dt" transform="translate(672.7,476.6) scale(-0.94,0.94)"/><use href="#dt" transform="translate(759.0,476.6) scale(-1.04,1.04)"/><use href="#dt" transform="translate(830.0,477.0) scale(-1.05,1.05)"/><use href="#dt" transform="translate(815.5,477.0) scale(0.89,0.89)"/><use href="#dt" transform="translate(869.3,477.0) scale(0.93,0.93)"/><use href="#dt" transform="translate(1081.9,477.1) scale(1.09,1.09)"/><use href="#dt" transform="translate(954.3,477.2) scale(-0.91,0.91)"/><use href="#dt" transform="translate(702.9,477.3) scale(0.90,0.90)"/><use href="#dt" transform="translate(898.2,477.4) scale(1.08,1.08)"/><use href="#dt" transform="translate(1111.1,477.6) scale(-0.99,0.99)"/><use href="#dt" transform="translate(742.5,477.6) scale(-1.08,1.08)"/><use href="#dt" transform="translate(943.3,477.9) scale(-1.03,1.03)"/><use href="#dt" transform="translate(1108.0,478.0) scale(-0.93,0.93)"/><use href="#dt" transform="translate(771.6,478.1) scale(1.05,1.05)"/><use href="#dt" transform="translate(966.6,478.2) scale(0.91,0.91)"/><use href="#dt" transform="translate(1024.0,478.3) scale(-0.94,0.94)"/><use href="#dt" transform="translate(887.6,478.4) scale(-0.92,0.92)"/><use href="#dt" transform="translate(1055.2,478.4) scale(-1.08,1.08)"/><use href="#dt" transform="translate(800.3,478.6) scale(-0.92,0.92)"/><use href="#dt" transform="translate(995.2,479.2) scale(0.96,0.96)"/><use href="#dt" transform="translate(714.8,479.3) scale(0.91,0.91)"/><use href="#dt" transform="translate(853.9,479.5) scale(0.89,0.89)"/><use href="#dt" transform="translate(689.0,480.0) scale(-1.04,1.04)"/><use href="#dt" transform="translate(911.7,481.3) scale(-0.99,0.99)"/><use href="#dt" transform="translate(870.9,482.0) scale(-0.94,0.94)"/><use href="#dt" transform="translate(926.0,482.4) scale(0.97,0.97)"/><use href="#dt" transform="translate(844.6,483.7) scale(1.12,1.12)"/><use href="#dt" transform="translate(1009.6,484.0) scale(-0.90,0.90)"/><use href="#dt" transform="translate(1037.8,484.1) scale(-1.10,1.10)"/><use href="#dt" transform="translate(1069.8,484.2) scale(-1.05,1.05)"/><use href="#dt" transform="translate(785.1,485.0) scale(-1.11,1.11)"/><use href="#dt" transform="translate(758.3,485.0) scale(-1.07,1.07)"/><use href="#dt" transform="translate(983.0,486.1) scale(-0.91,0.91)"/><use href="#dt" transform="translate(816.2,486.2) scale(1.08,1.08)"/><use href="#dt" transform="translate(901.5,487.0) scale(-0.92,0.92)"/><use href="#dt" transform="translate(957.1,487.3) scale(-1.10,1.10)"/><use href="#dt" transform="translate(1095.9,487.6) scale(-1.02,1.02)"/><use href="#dt" transform="translate(728.8,487.7) scale(0.92,0.92)"/><use href="#dt" transform="translate(804.1,488.0) scale(-1.05,1.05)"/><use href="#dt" transform="translate(742.1,488.3) scale(-0.90,0.90)"/><use href="#dt" transform="translate(1110.8,488.5) scale(-1.03,1.03)"/><use href="#dt" transform="translate(939.5,488.6) scale(-0.95,0.95)"/><use href="#dt" transform="translate(830.5,488.7) scale(1.03,1.03)"/><use href="#dt" transform="translate(1113.0,488.7) scale(1.07,1.07)"/><use href="#dt" transform="translate(916.0,488.7) scale(-0.93,0.93)"/><use href="#dt" transform="translate(1053.4,489.4) scale(-1.06,1.06)"/><use href="#dt" transform="translate(884.2,489.6) scale(-1.05,1.05)"/><use href="#dt" transform="translate(771.7,490.0) scale(-1.07,1.07)"/><use href="#dt" transform="translate(1027.9,491.0) scale(1.08,1.08)"/><use href="#dt" transform="translate(1078.8,491.5) scale(-1.00,1.00)"/><use href="#dt" transform="translate(969.9,491.5) scale(-1.10,1.10)"/><use href="#dt" transform="translate(843.4,492.4) scale(-1.09,1.09)"/><use href="#dt" transform="translate(813.3,492.5) scale(0.92,0.92)"/><use href="#dt" transform="translate(1040.8,492.8) scale(-0.97,0.97)"/><use href="#dt" transform="translate(1013.9,493.1) scale(0.97,0.97)"/><use href="#dt" transform="translate(998.1,493.1) scale(0.88,0.88)"/><use href="#dt" transform="translate(859.0,493.2) scale(0.99,0.99)"/><use href="#dt" transform="translate(958.0,493.9) scale(0.91,0.91)"/><use href="#dt" transform="translate(982.5,493.9) scale(1.08,1.08)"/><use href="#dt" transform="translate(925.3,494.0) scale(0.96,0.96)"/><use href="#dt" transform="translate(783.8,494.0) scale(0.97,0.97)"/><use href="#dt" transform="translate(1069.3,495.2) scale(0.89,0.89)"/><use href="#dt" transform="translate(867.8,495.4) scale(-1.11,1.11)"/><use href="#dt" transform="translate(1092.4,496.3) scale(1.00,1.00)"/><use href="#dt" transform="translate(966.5,498.0) scale(-1.01,1.01)"/><use href="#dt" transform="translate(899.8,498.1) scale(-1.11,1.11)"/><use href="#dt" transform="translate(760.2,498.6) scale(-0.92,0.92)"/><use href="#dt" transform="translate(1054.5,498.8) scale(0.94,0.94)"/><use href="#dt" transform="translate(826.3,499.2) scale(-0.89,0.89)"/><use href="#dt" transform="translate(856.7,499.3) scale(-1.05,1.05)"/><use href="#dt" transform="translate(1118.0,499.3) scale(0.88,0.88)"/><use href="#dt" transform="translate(1080.4,499.4) scale(1.02,1.02)"/><use href="#dt" transform="translate(914.0,499.5) scale(-1.05,1.05)"/><use href="#dt" transform="translate(994.7,500.1) scale(1.09,1.09)"/><use href="#dt" transform="translate(770.8,500.4) scale(-0.89,0.89)"/><use href="#dt" transform="translate(940.4,500.4) scale(1.00,1.00)"/><use href="#dt" transform="translate(888.2,501.3) scale(-0.95,0.95)"/><use href="#dt" transform="translate(802.4,501.7) scale(-0.98,0.98)"/><use href="#dt" transform="translate(1023.5,502.1) scale(1.02,1.02)"/><use href="#dt" transform="translate(1108.4,503.0) scale(0.92,0.92)"/><use href="#dt" transform="translate(952.5,503.8) scale(-1.06,1.06)"/><use href="#dt" transform="translate(1014.0,504.1) scale(1.08,1.08)"/><use href="#dt" transform="translate(840.2,504.5) scale(-0.97,0.97)"/><use href="#dt" transform="translate(870.7,504.7) scale(1.08,1.08)"/><use href="#dt" transform="translate(812.7,505.1) scale(0.97,0.97)"/><use href="#dt" transform="translate(784.4,505.4) scale(-1.07,1.07)"/><use href="#dt" transform="translate(1094.2,506.0) scale(-0.94,0.94)"/><use href="#dt" transform="translate(901.8,506.3) scale(0.98,0.98)"/><use href="#dt" transform="translate(1037.1,507.6) scale(1.07,1.07)"/><use href="#dt" transform="translate(1065.5,507.8) scale(1.08,1.08)"/><use href="#dt" transform="translate(927.4,508.5) scale(0.89,0.89)"/><use href="#dt" transform="translate(984.1,508.7) scale(1.11,1.11)"/><use href="#dt" transform="translate(1111.1,509.2) scale(-0.94,0.94)"/><use href="#dt" transform="translate(830.5,509.4) scale(-1.03,1.03)"/><use href="#dt" transform="translate(1051.4,509.6) scale(-1.01,1.01)"/><use href="#dt" transform="translate(1023.8,509.8) scale(0.98,0.98)"/><use href="#dt" transform="translate(1123.0,510.0) scale(-0.88,0.88)"/><use href="#dt" transform="translate(913.4,510.6) scale(1.11,1.11)"/><use href="#dt" transform="translate(884.1,510.8) scale(1.10,1.10)"/><use href="#dt" transform="translate(969.2,511.8) scale(1.07,1.07)"/><use href="#dt" transform="translate(798.1,513.4) scale(-1.09,1.09)"/><use href="#dt" transform="translate(943.9,513.5) scale(-1.03,1.03)"/><use href="#dt" transform="translate(981.3,513.5) scale(-1.04,1.04)"/><use href="#dt" transform="translate(900.4,513.6) scale(1.01,1.01)"/><use href="#dt" transform="translate(1037.4,513.7) scale(-1.03,1.03)"/><use href="#dt" transform="translate(1069.9,514.0) scale(-1.00,1.00)"/><use href="#dt" transform="translate(855.1,514.1) scale(-1.11,1.11)"/><use href="#dt" transform="translate(1079.8,514.2) scale(0.95,0.95)"/><use href="#dt" transform="translate(995.2,514.3) scale(0.91,0.91)"/><use href="#dt" transform="translate(1092.7,515.1) scale(1.11,1.11)"/><use href="#dt" transform="translate(1123.8,515.3) scale(-0.94,0.94)"/><use href="#dt" transform="translate(928.6,515.9) scale(-1.01,1.01)"/><use href="#dt" transform="translate(955.1,517.7) scale(-0.91,0.91)"/><use href="#dt" transform="translate(1010.1,518.6) scale(-0.95,0.95)"/><use href="#dt" transform="translate(943.4,518.7) scale(-0.95,0.95)"/><use href="#dt" transform="translate(994.7,518.9) scale(0.90,0.90)"/><use href="#dt" transform="translate(910.9,519.6) scale(1.08,1.08)"/><use href="#dt" transform="translate(968.3,520.0) scale(1.02,1.02)"/><use href="#dt" transform="translate(1133.3,520.3) scale(0.93,0.93)"/><use href="#dt" transform="translate(1107.2,521.1) scale(0.99,0.99)"/><use href="#dt" transform="translate(1134.6,521.3) scale(-1.03,1.03)"/><use href="#dt" transform="translate(1079.8,522.2) scale(-0.95,0.95)"/><use href="#dt" transform="translate(1021.8,523.4) scale(0.93,0.93)"/><use href="#dt" transform="translate(1050.8,524.2) scale(0.97,0.97)"/><use href="#dt" transform="translate(982.0,526.5) scale(-0.88,0.88)"/><use href="#dt" transform="translate(1013.1,526.6) scale(-1.09,1.09)"/><use href="#dt" transform="translate(926.4,527.2) scale(-1.01,1.01)"/><use href="#dt" transform="translate(1036.0,527.3) scale(0.95,0.95)"/><use href="#dt" transform="translate(1122.5,527.5) scale(0.95,0.95)"/><use href="#dt" transform="translate(1067.6,527.8) scale(-0.92,0.92)"/><use href="#dt" transform="translate(957.8,528.4) scale(-1.09,1.09)"/><use href="#dt" transform="translate(969.6,529.1) scale(-0.89,0.89)"/><use href="#dt" transform="translate(1095.1,529.7) scale(0.99,0.99)"/><use href="#dt" transform="translate(1143.7,530.7) scale(-0.91,0.91)"/><use href="#dt" transform="translate(1053.5,531.1) scale(1.11,1.11)"/><use href="#dt" transform="translate(1109.1,531.5) scale(-0.92,0.92)"/><use href="#dt" transform="translate(994.2,531.6) scale(0.96,0.96)"/><use href="#dt" transform="translate(1080.1,531.7) scale(1.03,1.03)"/><use href="#dt" transform="translate(1134.4,531.9) scale(1.08,1.08)"/><use href="#dt" transform="translate(1027.7,533.1) scale(1.06,1.06)"/><use href="#dt" transform="translate(984.2,535.6) scale(-1.06,1.06)"/><use href="#dt" transform="translate(1065.2,536.7) scale(1.07,1.07)"/><use href="#dt" transform="translate(1008.1,537.3) scale(-1.10,1.10)"/><use href="#dt" transform="translate(1092.5,537.4) scale(-1.09,1.09)"/><use href="#dt" transform="translate(1122.5,538.5) scale(1.06,1.06)"/><use href="#dt" transform="translate(955.9,539.2) scale(1.00,1.00)"/><use href="#dt" transform="translate(1152.5,539.5) scale(-1.02,1.02)"/><use href="#dt" transform="translate(1027.8,539.7) scale(1.07,1.07)"/><use href="#dt" transform="translate(1137.1,539.8) scale(-1.03,1.03)"/><use href="#dt" transform="translate(1167.0,540.5) scale(-0.99,0.99)"/><use href="#dt" transform="translate(1037.9,540.6) scale(-1.05,1.05)"/><use href="#dt" transform="translate(1154.0,541.0) scale(0.97,0.97)"/><use href="#dt" transform="translate(1106.6,541.1) scale(-0.97,0.97)"/><use href="#dt" transform="translate(967.7,542.5) scale(1.07,1.07)"/><use href="#dt" transform="translate(1165.6,543.6) scale(-1.00,1.00)"/><use href="#dt" transform="translate(999.5,545.2) scale(-0.92,0.92)"/><use href="#dt" transform="translate(1052.3,545.9) scale(0.91,0.91)"/><use href="#dt" transform="translate(1083.3,545.9) scale(-1.02,1.02)"/><use href="#dt" transform="translate(1064.7,546.1) scale(-1.10,1.10)"/><use href="#dt" transform="translate(1177.2,546.2) scale(1.08,1.08)"/><use href="#dt" transform="translate(1122.7,547.6) scale(-1.11,1.11)"/><use href="#dt" transform="translate(1176.5,548.2) scale(0.98,0.98)"/><use href="#dt" transform="translate(1188.8,548.8) scale(-0.88,0.88)"/><use href="#dt" transform="translate(984.9,549.5) scale(-1.02,1.02)"/><use href="#dt" transform="translate(1137.9,550.6) scale(1.10,1.10)"/><use href="#dt" transform="translate(1010.2,550.7) scale(1.01,1.01)"/><use href="#dt" transform="translate(1097.0,551.0) scale(1.00,1.00)"/><use href="#dt" transform="translate(1149.0,551.1) scale(-1.04,1.04)"/><use href="#dt" transform="translate(1041.5,551.1) scale(0.97,0.97)"/><use href="#dt" transform="translate(1080.1,551.3) scale(0.96,0.96)"/><use href="#dt" transform="translate(1200.4,551.4) scale(1.04,1.04)"/><use href="#dt" transform="translate(1218.6,551.5) scale(-0.90,0.90)"/><use href="#dt" transform="translate(1053.0,551.5) scale(0.98,0.98)"/><use href="#dt" transform="translate(1023.3,553.1) scale(1.02,1.02)"/><use href="#dt" transform="translate(1196.1,553.7) scale(-1.11,1.11)"/><use href="#dt" transform="translate(1212.0,554.0) scale(0.99,0.99)"/><use href="#dt" transform="translate(1110.4,555.8) scale(-1.12,1.12)"/><use href="#dt" transform="translate(1037.5,555.8) scale(1.01,1.01)"/><use href="#dt" transform="translate(1165.0,555.9) scale(-0.92,0.92)"/><use href="#dt" transform="translate(1093.1,556.1) scale(1.11,1.11)"/><use href="#dt" transform="translate(998.5,556.4) scale(-1.00,1.00)"/><use href="#dt" transform="translate(1235.6,556.6) scale(1.09,1.09)"/><use href="#dt" transform="translate(983.0,556.6) scale(1.08,1.08)"/><use href="#dt" transform="translate(1224.5,557.0) scale(-1.09,1.09)"/><use href="#dt" transform="translate(1179.9,557.6) scale(-0.92,0.92)"/><use href="#dt" transform="translate(1009.0,557.6) scale(1.00,1.00)"/><use href="#dt" transform="translate(1065.4,559.1) scale(-0.93,0.93)"/><use href="#dt" transform="translate(1119.9,559.3) scale(1.03,1.03)"/><use href="#dt" transform="translate(1207.5,559.5) scale(0.96,0.96)"/><use href="#dt" transform="translate(1237.0,560.0) scale(-1.03,1.03)"/><use href="#dt" transform="translate(1222.0,560.7) scale(0.98,0.98)"/><use href="#dt" transform="translate(1150.9,561.4) scale(0.95,0.95)"/><use href="#dt" transform="translate(1082.5,561.9) scale(-0.88,0.88)"/><use href="#dt" transform="translate(1163.1,562.2) scale(1.08,1.08)"/><use href="#dt" transform="translate(999.8,562.7) scale(-1.04,1.04)"/><use href="#dt" transform="translate(1249.5,563.0) scale(1.00,1.00)"/><use href="#dt" transform="translate(1106.1,564.1) scale(0.94,0.94)"/><use href="#dt" transform="translate(1246.4,564.6) scale(1.01,1.01)"/><use href="#dt" transform="translate(1055.0,564.7) scale(-1.02,1.02)"/><use href="#dt" transform="translate(1192.1,565.4) scale(-0.91,0.91)"/><use href="#dt" transform="translate(1138.5,565.5) scale(-1.06,1.06)"/><use href="#dt" transform="translate(1205.8,565.8) scale(-0.90,0.90)"/><use href="#dt" transform="translate(1013.5,566.0) scale(1.01,1.01)"/><use href="#dt" transform="translate(1262.0,566.0) scale(1.03,1.03)"/><use href="#dt" transform="translate(1027.9,566.7) scale(-0.89,0.89)"/><use href="#dt" transform="translate(1153.7,566.9) scale(-1.06,1.06)"/><use href="#dt" transform="translate(1068.0,567.1) scale(-1.05,1.05)"/><use href="#dt" transform="translate(1122.9,567.3) scale(-0.92,0.92)"/><use href="#dt" transform="translate(1235.8,568.8) scale(0.90,0.90)"/><use href="#dt" transform="translate(1036.4,569.0) scale(-1.02,1.02)"/><use href="#dt" transform="translate(1181.4,569.4) scale(-0.99,0.99)"/><use href="#dt" transform="translate(1259.9,569.9) scale(0.89,0.89)"/><use href="#dt" transform="translate(1110.6,571.3) scale(1.02,1.02)"/><use href="#dt" transform="translate(1137.1,571.4) scale(0.99,0.99)"/><use href="#dt" transform="translate(1056.1,571.7) scale(-0.94,0.94)"/><use href="#dt" transform="translate(1097.8,572.0) scale(1.10,1.10)"/><use href="#dt" transform="translate(1192.6,572.2) scale(0.96,0.96)"/><use href="#dt" transform="translate(1024.3,572.7) scale(-1.08,1.08)"/><use href="#dt" transform="translate(1165.0,573.1) scale(1.02,1.02)"/><use href="#dt" transform="translate(1217.8,573.3) scale(1.00,1.00)"/><use href="#dt" transform="translate(1280.0,576.0) scale(-0.94,0.94)"/><use href="#dt" transform="translate(1251.4,576.1) scale(-1.05,1.05)"/><use href="#dt" transform="translate(1094.9,576.6) scale(0.95,0.95)"/><use href="#dt" transform="translate(1077.8,576.8) scale(1.00,1.00)"/><use href="#dt" transform="translate(1204.0,577.3) scale(-0.94,0.94)"/><use href="#dt" transform="translate(1063.9,578.4) scale(-0.97,0.97)"/><use href="#dt" transform="translate(1040.3,579.2) scale(-1.11,1.11)"/><use href="#dt" transform="translate(1124.7,581.3) scale(-1.01,1.01)"/><use href="#dt" transform="translate(1010.4,581.5) scale(-1.01,1.01)"/><use href="#dt" transform="translate(1194.6,581.9) scale(-0.98,0.98)"/><use href="#dt" transform="translate(1179.5,581.9) scale(0.91,0.91)"/><use href="#dt" transform="translate(1152.8,582.3) scale(-0.96,0.96)"/><use href="#dt" transform="translate(1232.7,582.3) scale(-0.93,0.93)"/><use href="#dt" transform="translate(1111.2,582.3) scale(-0.94,0.94)"/><use href="#dt" transform="translate(1162.0,582.7) scale(-1.04,1.04)"/><use href="#dt" transform="translate(1248.4,583.2) scale(0.92,0.92)"/><use href="#dt" transform="translate(1218.5,583.8) scale(-0.90,0.90)"/><use href="#dt" transform="translate(1137.0,584.0) scale(-1.08,1.08)"/><use href="#dt" transform="translate(1024.6,584.7) scale(0.99,0.99)"/><use href="#dt" transform="translate(1052.8,586.8) scale(-1.07,1.07)"/><use href="#dt" transform="translate(1080.5,586.8) scale(0.96,0.96)"/><use href="#dt" transform="translate(1233.4,587.8) scale(0.97,0.97)"/><use href="#dt" transform="translate(1122.7,587.9) scale(0.93,0.93)"/><use href="#dt" transform="translate(1068.1,588.0) scale(-1.00,1.00)"/><use href="#dt" transform="translate(1148.2,589.0) scale(-0.99,0.99)"/><use href="#dt" transform="translate(1097.7,589.3) scale(-1.05,1.05)"/><use href="#dt" transform="translate(1037.3,589.5) scale(1.10,1.10)"/><use href="#dt" transform="translate(1207.7,589.6) scale(-0.97,0.97)"/><use href="#dt" transform="translate(1139.9,592.9) scale(-1.03,1.03)"/><use href="#dt" transform="translate(1176.5,593.2) scale(-1.09,1.09)"/><use href="#dt" transform="translate(1195.0,593.7) scale(1.00,1.00)"/><use href="#dt" transform="translate(1109.6,595.6) scale(0.94,0.94)"/><use href="#dt" transform="translate(1219.2,595.8) scale(0.97,0.97)"/><use href="#dt" transform="translate(1080.4,597.7) scale(-1.02,1.02)"/><use href="#dt" transform="translate(1055.2,597.9) scale(-0.97,0.97)"/><use href="#dt" transform="translate(1122.8,598.0) scale(0.92,0.92)"/><use href="#dt" transform="translate(1162.8,598.0) scale(0.96,0.96)"/><use href="#dt" transform="translate(1152.6,598.3) scale(0.91,0.91)"/><use href="#dt" transform="translate(1065.8,598.6) scale(0.97,0.97)"/><use href="#dt" transform="translate(1179.8,599.8) scale(-0.95,0.95)"/><use href="#dt" transform="translate(1097.6,601.3) scale(-0.95,0.95)"/><use href="#dt" transform="translate(1207.1,603.0) scale(0.91,0.91)"/><use href="#dt" transform="translate(1166.1,608.3) scale(-0.95,0.95)"/><use href="#dt" transform="translate(1193.9,608.8) scale(1.10,1.10)"/><use href="#dt" transform="translate(1139.3,608.9) scale(1.09,1.09)"/><use href="#dt" transform="translate(1180.9,609.5) scale(-0.91,0.91)"/><use href="#dt" transform="translate(1153.5,609.6) scale(0.89,0.89)"/><use href="#dt" transform="translate(1162.9,618.1) scale(-1.04,1.04)"/></g>
<g clip-path="url(#clipT)">
<polygon points="402,448 455,427 466,417 487,409 510,386 524,399 541,405 547,397 540,423 528,440 510,475 470,485 430,470" fill="#596048" />
<polygon points="491,401 509,385 524,399 541,405 537,428 521,437 507,435 483,421" fill="#5f6850" />
<polygon points="509,385 524,399 541,405 547,397 530,390" fill="#6a7258" />
<polygon points="470,418 491,401 483,421 507,435 500,455 475,445" fill="#4e563f" />
<polygon points="483,421 507,435 521,437 537,428 528,445 505,460 490,445" fill="#454c36" />
<polygon points="455,427 470,418 475,445 455,460 440,450" fill="#58604a" />
<polygon points="365.5,450 376,444 389,443.4 402,448 413.7,451 415,490 406,501 391.6,508.5 372,501 365,470" fill="#52623e" />
<polygon points="365.5,450 376,444 389,453.8 374.6,478.6 369.4,472" fill="#3a4730" />
<polygon points="389,453.8 404.6,474.7 390.3,490.3 374.6,478.6" fill="#44522f" />
<polygon points="389,453.8 402,448 413.7,451 411,482.5 404.6,474.7" fill="#4d5c3a" />
<polygon points="376,444 389,443.4 402,448 389,453.8" fill="#5a6a45" />
<polygon points="390.3,490.3 404.6,474.7 411,482.5 406,500.7" fill="#4e5e3b" />
<polygon points="413.7,451 453,436 470,440 460,480 411,482.5" fill="#4e5c3a" />
<polygon points="555,373 570,390 584,447 569,472 554,437 540,423 547,397" fill="#3a3424" />
<polygon points="555,373 570,390 554,437 540,423 547,397" fill="#352e1f" />
<polygon points="555,373 575,393 601,442 584,447 570,390" fill="#7e7c68" />
<polygon points="584,447 601,442 612,456 603,491 580,512 569,472" fill="#5f6a50" />
<polygon points="540,423 554,437 569,472 555,490 510,475 528,440" fill="#3a4529" />
<polygon points="510,475 555,490 569,472 580,512 575,525 555,524 510,515" fill="#2f3d27" />
<polygon points="601,442 620,437 612,456" fill="#6e735e" />
<polygon points="612,456 610,435 633,414 648,405 669,447 680,460 640,470" fill="#4d5340" />
<polygon points="633,414 648,405 669,447 680,460 660,455" fill="#6f725e" />
<polygon points="618,345 625,338 632,350" fill="#4a4f3a" />
<polygon points="402,448 455,427 461,428 409,452" fill="#5a6890" />
<polygon points="440,440 461,428 470,432 420,452" fill="#394260" />
<polygon points="774,509 779,488 791,487 809,497 825,510 840,483 856,476 871,452 880,458 898,449 915,433 929,438 942,458 956,487 989,489 1004,498 1013,529 1030,560 1064,578 1090,560 1100,610 1000,700 900,700 850,600 800,560" fill="#4a4b3a" />
<polygon points="774,509 779,488 791,487 809,497 825,510 819,518 796,523" fill="#4a4337" />
<polygon points="825,510 840,483 856,476 871,488 857,514 840,523" fill="#342f22" />
<polygon points="856,476 871,452 880,458 898,449 887,462 885,487 871,488" fill="#5a5044" />
<polygon points="915,433 898,449 887,462 885,487 913,522 930,502" fill="#4a4236" />
<polygon points="915,433 929,438 942,458 958,522 975,544 958,540 944,522 930,502" fill="#8c887a" />
<polygon points="942,458 956,487 989,489 1004,498 1013,529 975,544 958,522" fill="#6f705e" />
<polygon points="871,488 885,487 913,522 900,523 871,549 857,514" fill="#5e5e4c" />
<polygon points="796,523 819,518 840,523 857,514 871,549 880,575 800,570" fill="#373726" />
<polygon points="913,522 930,502 944,522 958,540 961,600 940,573 914,526" fill="#666a55" />
<polygon points="900,523 878,554 873,565 899,584 911,579 915,565" fill="#3b3526" />
<polygon points="901,523 914,526 940,573 961,622 956,625 932,612 917,573" fill="#a3a48e" />
<polygon points="911,579 917,573 932,612 956,625 955,640 990,696 961,693 928,714 899,725 880,700 900,640" fill="#7a7e66" />
<polygon points="932,612 956,625 955,640 930,650 915,620" fill="#8d927a" />
<polygon points="940,573 961,570 975,544 986,578 953,583 961,616 955,625" fill="#6a705a" />
<polygon points="960,600 990,595 1018,612 989,622 966,618" fill="#3d432e" />
<polygon points="989,617 1018,604 1034,609 1013,632" fill="#525a43" />
<polygon points="1090,560 1057,578 1034,609 1015,630 989,647 990,696 1019,683 1038,667 1058,644 1067,636 1079,629 1095,608" fill="#4d5540" />
<polygon points="989,647 1015,630 1040,650 1019,683 990,696" fill="#5a624b" />
<polygon points="955,637 989,647 990,696 961,693 950,670" fill="#666d55" />
<polygon points="961,616 1013,632 989,647 956,637" fill="#2d3648" />
<polygon points="961,616 990,625 975,632 958,628" fill="#3a4458" />
<polygon points="990,439 1002,453 996,462 990,458" fill="#3a3a2c" />
<polygon points="982,444 989,436 1004,451 1000,462" fill="#4a4a3a" />
<polygon points="1002,457 1017,447 1034,470 1021,499 1009,503 1000,482" fill="#56584a" />
<polygon points="1034,470 1059,516 1040,524 1021,499" fill="#33352a" />
<polygon points="990,489 1002,499 1013,528 990,537" fill="#7e7f6c" />
<polygon points="1052,472 1067,468 1088,478 1073,495 1052,493" fill="#5d5e4e" />
<polygon points="1092,425 1110,428 1123,446 1144,482 1170,495 1212,508 1233,521 1227,529 1175,506 1141,493 1118,469 1102,443" fill="#6c7a5c" />
<polygon points="1090,426 1107,428 1115,443 1125,468 1136,480 1150,489 1150,499 1136,491 1123,480 1111,457 1098,435" fill="#7e866c" />
<polygon points="1094,491 1111,487 1119,503 1098,505" fill="#6b6f5d" />
<polygon points="1107,541 1123,537 1140,553 1115,562" fill="#5c5f4d" />
<polygon points="1061,568 1080,564 1098,580 1059,580" fill="#3e4030" />
<polygon points="1085,473 1100,487 1116,487 1109,501 1093,503 1075,497" fill="#666c56" />
<polygon points="1104,538 1126,536 1142,550 1130,562 1107,560" fill="#5f6852" />
<polygon points="1154,562 1170,555 1186,564 1170,576 1158,571" fill="#4f5a44" />
<polygon points="1229,562 1247,557 1252,564 1233,571" fill="#5a6650" />
<polygon points="1060,576 1081,564 1095,585 1093,620 1060,630" fill="#3e4030" />
</g>
<g filter="url(#leaf)"><use href="#dt" transform="translate(1038.1,540.8) scale(0.92,0.92)"/><use href="#dt" transform="translate(1079.1,545.0) scale(-1.02,1.02)"/><use href="#dt" transform="translate(1024.0,546.0) scale(1.06,1.06)"/><use href="#dt" transform="translate(1035.6,550.2) scale(-0.91,0.91)"/><use href="#dt" transform="translate(1064.8,551.0) scale(-0.97,0.97)"/><use href="#dt" transform="translate(1050.3,555.0) scale(-0.89,0.89)"/><use href="#dt" transform="translate(1023.6,555.5) scale(0.93,0.93)"/><use href="#dt" transform="translate(1077.7,555.8) scale(-0.99,0.99)"/><use href="#dt" transform="translate(1066.3,560.4) scale(-0.96,0.96)"/><use href="#dt" transform="translate(1008.0,560.6) scale(-0.97,0.97)"/><use href="#dt" transform="translate(1094.3,561.1) scale(-0.90,0.90)"/><use href="#dt" transform="translate(1035.8,562.4) scale(1.12,1.12)"/><use href="#dt" transform="translate(1078.7,565.9) scale(0.90,0.90)"/><use href="#dt" transform="translate(1052.3,566.5) scale(1.12,1.12)"/><use href="#dt" transform="translate(966.7,567.2) scale(-0.91,0.91)"/><use href="#dt" transform="translate(1022.8,567.3) scale(-0.98,0.98)"/><use href="#dt" transform="translate(993.8,568.0) scale(-1.01,1.01)"/><use href="#dt" transform="translate(1065.8,570.6) scale(1.10,1.10)"/><use href="#dt" transform="translate(982.0,571.6) scale(1.03,1.03)"/><use href="#dt" transform="translate(1008.4,571.6) scale(-1.04,1.04)"/><use href="#dt" transform="translate(1092.4,573.2) scale(-0.94,0.94)"/><use href="#dt" transform="translate(1036.1,573.2) scale(0.89,0.89)"/><use href="#dt" transform="translate(1022.5,575.8) scale(-1.08,1.08)"/><use href="#dt" transform="translate(1078.4,576.2) scale(0.92,0.92)"/><use href="#dt" transform="translate(967.6,576.5) scale(1.08,1.08)"/><use href="#dt" transform="translate(1052.3,577.8) scale(0.92,0.92)"/><use href="#dt" transform="translate(995.7,577.9) scale(1.08,1.08)"/><use href="#dt" transform="translate(1037.7,581.3) scale(-0.96,0.96)"/><use href="#dt" transform="translate(981.4,581.5) scale(-1.08,1.08)"/><use href="#dt" transform="translate(1007.6,581.9) scale(0.97,0.97)"/><use href="#dt" transform="translate(1091.9,582.7) scale(0.97,0.97)"/><use href="#dt" transform="translate(1065.6,583.4) scale(-0.94,0.94)"/><use href="#dt" transform="translate(993.6,586.4) scale(1.02,1.02)"/><use href="#dt" transform="translate(1079.6,588.3) scale(1.08,1.08)"/><use href="#dt" transform="translate(1024.0,588.6) scale(1.10,1.10)"/><use href="#dt" transform="translate(1051.7,588.7) scale(-1.00,1.00)"/><use href="#dt" transform="translate(1009.4,592.0) scale(-0.92,0.92)"/><use href="#dt" transform="translate(1037.6,592.7) scale(-1.02,1.02)"/><use href="#dt" transform="translate(1064.3,593.1) scale(-1.05,1.05)"/><use href="#dt" transform="translate(1092.5,593.9) scale(0.99,0.99)"/><use href="#dt" transform="translate(1022.4,596.9) scale(-0.90,0.90)"/><use href="#dt" transform="translate(1078.2,597.5) scale(-0.99,0.99)"/><use href="#dt" transform="translate(1051.4,598.1) scale(-1.05,1.05)"/><use href="#dt" transform="translate(1066.4,603.9) scale(1.08,1.08)"/><use href="#dt" transform="translate(1093.1,604.3) scale(-1.07,1.07)"/><use href="#dt" transform="translate(1037.7,604.5) scale(0.95,0.95)"/><use href="#dt" transform="translate(1079.0,608.6) scale(-1.00,1.00)"/><use href="#dt" transform="translate(1049.7,609.3) scale(-0.96,0.96)"/></g>
<g clip-path="url(#clipT)">
<polygon points="610,540 640,505 740,500 800,545 900,630 925,680 840,700 700,610 615,565" fill="#3e4c35" />
</g>
<g filter="url(#needle)"><use href="#ct" x="467.4" y="465.1"/><use href="#ct" x="483.2" y="471.0"/><use href="#ct" x="498.6" y="477.0"/><use href="#ct" x="468.1" y="477.3"/><use href="#ct" x="482.8" y="482.8"/><use href="#ct" x="453.2" y="483.6"/><use href="#ct" x="738.2" y="489.3"/><use href="#ct" x="468.0" y="489.8"/><use href="#ct" x="437.0" y="490.1"/><use href="#ct" x="499.2" y="490.2"/><use href="#ct" x="632.9" y="494.8"/><use href="#ct" x="452.1" y="494.8"/><use href="#ct" x="421.9" y="494.9"/><use href="#ct" x="721.9" y="495.4"/><use href="#ct" x="514.1" y="495.8"/><use href="#ct" x="482.9" y="496.5"/><use href="#ct" x="707.8" y="500.8"/><use href="#ct" x="738.6" y="500.9"/><use href="#ct" x="347.6" y="501.4"/><use href="#ct" x="467.3" y="501.7"/><use href="#ct" x="646.8" y="501.7"/><use href="#ct" x="437.7" y="501.7"/><use href="#ct" x="497.0" y="502.3"/><use href="#ct" x="513.7" y="506.5"/><use href="#ct" x="754.1" y="507.1"/><use href="#ct" x="633.8" y="507.1"/><use href="#ct" x="423.4" y="507.3"/><use href="#ct" x="453.9" y="507.5"/><use href="#ct" x="363.4" y="507.7"/><use href="#ct" x="721.9" y="507.7"/><use href="#ct" x="483.1" y="507.9"/><use href="#ct" x="333.4" y="508.2"/><use href="#ct" x="647.6" y="512.1"/><use href="#ct" x="497.7" y="512.5"/><use href="#ct" x="467.1" y="513.3"/><use href="#ct" x="437.8" y="513.4"/><use href="#ct" x="769.1" y="513.6"/><use href="#ct" x="738.5" y="513.9"/><use href="#ct" x="618.5" y="514.0"/><use href="#ct" x="708.2" y="514.2"/><use href="#ct" x="349.1" y="514.3"/><use href="#ct" x="334.0" y="518.4"/><use href="#ct" x="752.2" y="518.4"/><use href="#ct" x="694.0" y="518.8"/><use href="#ct" x="722.6" y="519.2"/><use href="#ct" x="362.5" y="519.4"/><use href="#ct" x="633.9" y="519.5"/><use href="#ct" x="663.9" y="519.9"/><use href="#ct" x="452.1" y="520.1"/><use href="#ct" x="782.3" y="520.1"/><use href="#ct" x="619.1" y="523.9"/><use href="#ct" x="708.4" y="524.4"/><use href="#ct" x="767.3" y="524.5"/><use href="#ct" x="738.7" y="524.6"/><use href="#ct" x="348.9" y="526.2"/><use href="#ct" x="647.9" y="526.3"/><use href="#ct" x="677.6" y="526.3"/><use href="#ct" x="723.2" y="530.4"/><use href="#ct" x="632.0" y="530.6"/><use href="#ct" x="332.5" y="530.9"/><use href="#ct" x="364.1" y="531.0"/><use href="#ct" x="694.0" y="531.2"/><use href="#ct" x="663.3" y="531.3"/><use href="#ct" x="782.7" y="531.7"/><use href="#ct" x="602.1" y="531.7"/><use href="#ct" x="753.6" y="532.0"/><use href="#ct" x="646.9" y="536.0"/><use href="#ct" x="617.6" y="536.1"/><use href="#ct" x="798.0" y="536.3"/><use href="#ct" x="678.0" y="536.6"/><use href="#ct" x="767.4" y="536.7"/><use href="#ct" x="349.1" y="537.2"/><use href="#ct" x="708.6" y="538.0"/><use href="#ct" x="738.7" y="538.0"/><use href="#ct" x="722.9" y="541.6"/><use href="#ct" x="752.2" y="541.7"/><use href="#ct" x="692.0" y="542.0"/><use href="#ct" x="783.9" y="542.0"/><use href="#ct" x="662.7" y="542.3"/><use href="#ct" x="363.4" y="542.3"/><use href="#ct" x="333.2" y="542.4"/><use href="#ct" x="602.2" y="542.9"/><use href="#ct" x="632.3" y="543.7"/><use href="#ct" x="348.7" y="547.6"/><use href="#ct" x="708.2" y="547.7"/><use href="#ct" x="797.8" y="547.8"/><use href="#ct" x="767.4" y="548.0"/><use href="#ct" x="677.4" y="548.1"/><use href="#ct" x="648.4" y="548.2"/><use href="#ct" x="737.9" y="548.2"/><use href="#ct" x="618.0" y="549.6"/><use href="#ct" x="633.2" y="553.5"/><use href="#ct" x="332.3" y="553.6"/><use href="#ct" x="753.7" y="554.0"/><use href="#ct" x="724.0" y="554.8"/><use href="#ct" x="602.5" y="555.0"/><use href="#ct" x="663.7" y="555.5"/><use href="#ct" x="362.6" y="555.5"/><use href="#ct" x="693.2" y="555.8"/><use href="#ct" x="783.9" y="555.8"/><use href="#ct" x="618.7" y="559.4"/><use href="#ct" x="677.6" y="559.6"/><use href="#ct" x="588.4" y="559.9"/><use href="#ct" x="647.5" y="560.5"/><use href="#ct" x="768.6" y="560.8"/><use href="#ct" x="708.7" y="561.4"/><use href="#ct" x="738.1" y="561.6"/><use href="#ct" x="796.8" y="561.7"/><use href="#ct" x="782.5" y="565.3"/><use href="#ct" x="573.5" y="565.3"/><use href="#ct" x="724.2" y="565.3"/><use href="#ct" x="602.7" y="565.5"/><use href="#ct" x="632.2" y="566.1"/><use href="#ct" x="754.2" y="566.4"/><use href="#ct" x="811.9" y="566.4"/><use href="#ct" x="664.1" y="566.8"/><use href="#ct" x="692.7" y="567.1"/><use href="#ct" x="737.1" y="571.1"/><use href="#ct" x="707.6" y="571.4"/><use href="#ct" x="587.3" y="572.2"/><use href="#ct" x="647.4" y="572.5"/><use href="#ct" x="617.2" y="573.1"/><use href="#ct" x="676.8" y="573.2"/><use href="#ct" x="797.6" y="573.2"/><use href="#ct" x="767.5" y="573.5"/><use href="#ct" x="573.2" y="577.2"/><use href="#ct" x="753.3" y="577.8"/><use href="#ct" x="603.9" y="578.3"/><use href="#ct" x="812.8" y="578.3"/><use href="#ct" x="632.9" y="578.4"/><use href="#ct" x="723.3" y="578.7"/><use href="#ct" x="662.5" y="578.8"/><use href="#ct" x="692.8" y="579.1"/><use href="#ct" x="782.1" y="579.3"/><use href="#ct" x="827.7" y="583.5"/><use href="#ct" x="618.4" y="583.8"/><use href="#ct" x="677.9" y="584.0"/><use href="#ct" x="797.1" y="584.1"/><use href="#ct" x="707.3" y="584.2"/><use href="#ct" x="767.3" y="584.3"/><use href="#ct" x="588.8" y="584.3"/><use href="#ct" x="737.9" y="584.5"/><use href="#ct" x="648.1" y="585.2"/><use href="#ct" x="812.7" y="588.8"/><use href="#ct" x="722.6" y="589.0"/><use href="#ct" x="632.7" y="589.6"/><use href="#ct" x="753.7" y="589.9"/><use href="#ct" x="692.0" y="590.0"/><use href="#ct" x="663.6" y="590.0"/><use href="#ct" x="573.1" y="590.7"/><use href="#ct" x="781.8" y="591.0"/><use href="#ct" x="587.1" y="594.8"/><use href="#ct" x="649.2" y="594.8"/><use href="#ct" x="678.2" y="595.4"/><use href="#ct" x="738.7" y="595.6"/><use href="#ct" x="708.9" y="596.2"/><use href="#ct" x="722.2" y="600.9"/><use href="#ct" x="694.0" y="601.3"/><use href="#ct" x="663.3" y="601.4"/><use href="#ct" x="752.6" y="602.8"/><use href="#ct" x="572.1" y="602.8"/><use href="#ct" x="677.2" y="606.7"/><use href="#ct" x="709.0" y="607.0"/><use href="#ct" x="739.2" y="607.0"/><use href="#ct" x="557.6" y="608.3"/><use href="#ct" x="648.1" y="608.4"/><use href="#ct" x="692.4" y="612.5"/><use href="#ct" x="723.6" y="612.6"/><use href="#ct" x="663.1" y="613.4"/><use href="#ct" x="543.9" y="613.9"/><use href="#ct" x="752.1" y="614.2"/><use href="#ct" x="738.6" y="618.5"/><use href="#ct" x="677.5" y="619.0"/><use href="#ct" x="526.8" y="619.7"/><use href="#ct" x="707.6" y="620.1"/><use href="#ct" x="558.4" y="620.3"/><use href="#ct" x="513.7" y="624.3"/><use href="#ct" x="692.2" y="624.8"/><use href="#ct" x="661.9" y="625.0"/><use href="#ct" x="723.8" y="625.2"/><use href="#ct" x="543.9" y="625.6"/><use href="#ct" x="752.0" y="625.7"/><use href="#ct" x="736.9" y="630.4"/><use href="#ct" x="888.5" y="630.8"/><use href="#ct" x="527.3" y="630.8"/><use href="#ct" x="557.1" y="631.0"/><use href="#ct" x="708.4" y="631.1"/><use href="#ct" x="678.5" y="631.4"/><use href="#ct" x="693.5" y="636.5"/><use href="#ct" x="903.5" y="636.7"/><use href="#ct" x="512.4" y="636.9"/><use href="#ct" x="723.1" y="637.4"/><use href="#ct" x="752.8" y="638.1"/><use href="#ct" x="544.0" y="638.1"/><use href="#ct" x="887.6" y="642.5"/><use href="#ct" x="708.4" y="642.7"/><use href="#ct" x="528.5" y="642.9"/><use href="#ct" x="736.9" y="643.1"/><use href="#ct" x="558.6" y="644.2"/><use href="#ct" x="751.9" y="649.2"/><use href="#ct" x="902.8" y="649.4"/><use href="#ct" x="723.1" y="649.4"/><use href="#ct" x="542.2" y="649.6"/><use href="#ct" x="917.6" y="653.9"/><use href="#ct" x="888.8" y="653.9"/><use href="#ct" x="738.1" y="654.1"/><use href="#ct" x="903.7" y="660.4"/><use href="#ct" x="752.8" y="661.8"/><use href="#ct" x="918.6" y="666.4"/><use href="#ct" x="888.3" y="667.6"/><use href="#ct" x="932.9" y="672.5"/><use href="#ct" x="902.7" y="672.8"/><use href="#ct" x="887.3" y="678.3"/><use href="#ct" x="918.1" y="678.5"/><use href="#ct" x="904.0" y="683.7"/><use href="#ct" x="933.8" y="684.2"/><use href="#ct" x="888.7" y="690.6"/><use href="#ct" x="919.0" y="690.9"/><use href="#ct" x="904.1" y="696.7"/><use href="#ct" x="932.9" y="697.1"/><use href="#ct" x="887.7" y="701.0"/><use href="#ct" x="916.9" y="702.3"/><use href="#ct" x="902.7" y="708.4"/><use href="#ct" x="887.9" y="713.6"/></g>
<g clip-path="url(#clipT)">
<polygon points="775,487.5 793,485.7 807.5,494.8 824,514.8 842,483.8 853,478.4 860,474.7 871,452 899,461 887,488 897,523 871,560 840,570 780,570 773,522" fill="#3a3526" />
<polygon points="775,487.5 793,485.7 807.5,494.8 795,522 778,508" fill="#4a4234" />
<polygon points="807.5,494.8 824,514.8 820,529 795,522" fill="#36321f" />
<polygon points="824,514.8 842,483.8 853,478.4 860,474.7 871,488 857,514 840,523" fill="#3a3526" />
<polygon points="856,476 871,452 899,461 887,488 871,488" fill="#5a5044" />
<polygon points="773,504 795,522 804,548 782,538" fill="#5a5a48" />
<polygon points="871,488 885,487 913,522 900,523 871,549 857,514" fill="#5e5e4c" />
<polygon points="795,522 820,529 840,523 857,514 871,549 880,575 800,570" fill="#33301f" />
</g>
<g filter="url(#needle)"><use href="#ct" x="827.3" y="595.0"/><use href="#ct" x="797.1" y="595.7"/><use href="#ct" x="767.2" y="596.8"/><use href="#ct" x="843.1" y="602.1"/><use href="#ct" x="813.5" y="602.2"/><use href="#ct" x="782.2" y="602.4"/><use href="#ct" x="768.9" y="607.1"/><use href="#ct" x="797.2" y="608.1"/><use href="#ct" x="828.8" y="608.4"/><use href="#ct" x="782.0" y="612.8"/><use href="#ct" x="843.4" y="613.2"/><use href="#ct" x="813.1" y="613.7"/><use href="#ct" x="829.0" y="618.4"/><use href="#ct" x="857.9" y="619.8"/><use href="#ct" x="797.2" y="620.1"/><use href="#ct" x="768.6" y="620.3"/><use href="#ct" x="783.4" y="624.4"/><use href="#ct" x="873.5" y="625.3"/><use href="#ct" x="843.3" y="625.5"/><use href="#ct" x="813.5" y="626.6"/><use href="#ct" x="798.0" y="630.4"/><use href="#ct" x="828.5" y="630.9"/><use href="#ct" x="767.5" y="630.9"/><use href="#ct" x="858.8" y="632.2"/><use href="#ct" x="842.3" y="637.5"/><use href="#ct" x="813.9" y="637.7"/><use href="#ct" x="872.9" y="637.9"/><use href="#ct" x="782.6" y="638.2"/><use href="#ct" x="858.9" y="642.0"/><use href="#ct" x="797.6" y="643.1"/><use href="#ct" x="828.4" y="643.2"/><use href="#ct" x="768.0" y="644.0"/><use href="#ct" x="873.6" y="648.2"/><use href="#ct" x="812.8" y="648.6"/><use href="#ct" x="783.5" y="649.9"/><use href="#ct" x="842.4" y="650.0"/><use href="#ct" x="799.0" y="654.5"/><use href="#ct" x="767.2" y="655.3"/><use href="#ct" x="857.7" y="655.7"/><use href="#ct" x="827.6" y="656.0"/><use href="#ct" x="784.2" y="659.7"/><use href="#ct" x="873.4" y="660.5"/><use href="#ct" x="842.9" y="661.3"/><use href="#ct" x="812.8" y="661.9"/><use href="#ct" x="858.8" y="665.8"/><use href="#ct" x="768.2" y="666.6"/><use href="#ct" x="826.8" y="667.3"/><use href="#ct" x="797.3" y="667.8"/><use href="#ct" x="873.0" y="672.0"/><use href="#ct" x="812.7" y="672.3"/><use href="#ct" x="843.1" y="672.5"/><use href="#ct" x="782.4" y="673.3"/><use href="#ct" x="857.2" y="677.9"/><use href="#ct" x="828.8" y="678.5"/><use href="#ct" x="798.9" y="679.1"/><use href="#ct" x="768.2" y="679.4"/><use href="#ct" x="783.5" y="683.3"/><use href="#ct" x="842.3" y="683.5"/><use href="#ct" x="812.8" y="683.5"/><use href="#ct" x="872.7" y="684.0"/><use href="#ct" x="797.5" y="689.5"/><use href="#ct" x="857.0" y="690.0"/><use href="#ct" x="828.2" y="691.5"/><use href="#ct" x="814.2" y="695.0"/><use href="#ct" x="872.7" y="695.0"/><use href="#ct" x="844.0" y="696.3"/><use href="#ct" x="797.4" y="701.1"/><use href="#ct" x="858.7" y="702.2"/><use href="#ct" x="827.4" y="702.4"/><use href="#ct" x="843.1" y="708.1"/><use href="#ct" x="872.3" y="708.2"/><use href="#ct" x="813.3" y="709.0"/><use href="#ct" x="857.9" y="712.9"/><use href="#ct" x="828.6" y="713.6"/><use href="#ct" x="871.9" y="719.0"/><use href="#ct" x="843.8" y="719.2"/><use href="#ct" x="812.4" y="720.1"/><use href="#ct" x="828.5" y="725.4"/><use href="#ct" x="857.7" y="726.9"/><use href="#ct" x="842.2" y="732.4"/></g>
<g>
<polyline points="410,595 576,529" stroke="#a88860" stroke-width="7" fill="none"/>
<polyline points="410,595 576,529" stroke="#c9a982" stroke-width="2" fill="none"/>
<polyline points="1020,361 920,390 958,409" stroke="#b89a72" stroke-width="7" fill="none" stroke-linejoin="miter"/>
<polyline points="1118,443 1124,456 1131,466 1144,482 1160,491 1183,499 1248,522 1342,556" stroke="#a88860" stroke-width="7" fill="none" stroke-linejoin="round"/>
<polyline points="1118,443 1130,465 1144,482 1183,498 1248,521 1342,555" stroke="#c9a982" stroke-width="2" fill="none" stroke-linejoin="round"/>
<polyline points="780,442 797,431" stroke="#b08e64" stroke-width="5" fill="none"/>
<polygon points="900,386 914,380 927,386 912,391" fill="#a9a9ad" />
<polygon points="916,380 930.5,375 945,380 930.5,386" fill="#9ec43a" />
<polygon points="437,568 450,573 478,562 478,564 450,575 436,570" fill="#8a8a8a" />
<polygon points="438,557 450,561 450,572 437,568" fill="#111111" />
<polygon points="450,561 477,550 477,562 450,572" fill="#0c0c0e" />
<polygon points="441,559 443,559.5 443,570 441,569" fill="#7a7a7a" />
<polygon points="454,559 456,558 456,570 454,571" fill="#7a7a7a" />
<polygon points="463,555.5 465,554.5 465,567 463,568" fill="#8a8a8a" />
<polygon points="472,552 474,551 474,563 472,564" fill="#7a7a7a" />
<polygon points="458,558 461,557 461,563 458,564" fill="#d8d080" />
<polygon points="435,549.5 450,555 450,559 435,554" fill="#a0a0a4" />
<polygon points="450,555 479,543.7 479.7,548.2 450,559" fill="#a8a8ac" />
<polygon points="466,549.5 478,545 478,547.5 466,552" fill="#e02020" />
<polygon points="438,552 448,555.5 448,557 438,553.5" fill="#2a3a6a" />
<polygon points="452,556 462,552.5 462,554 452,557.5" fill="#2a3a6a" />
<polygon points="435,549.5 464.7,538.5 479,543.7 450,555" fill="#242424" />
</g></svg></div><!--/canvas-->
<div class="abs" style="left:338px;top:748px;font-size:12px;font-style:italic;color:#111;white-space:nowrap">ROT: 0 LI: 222 TW: 30 CH: 39 FPS: 4.3</div>
</body></html>
